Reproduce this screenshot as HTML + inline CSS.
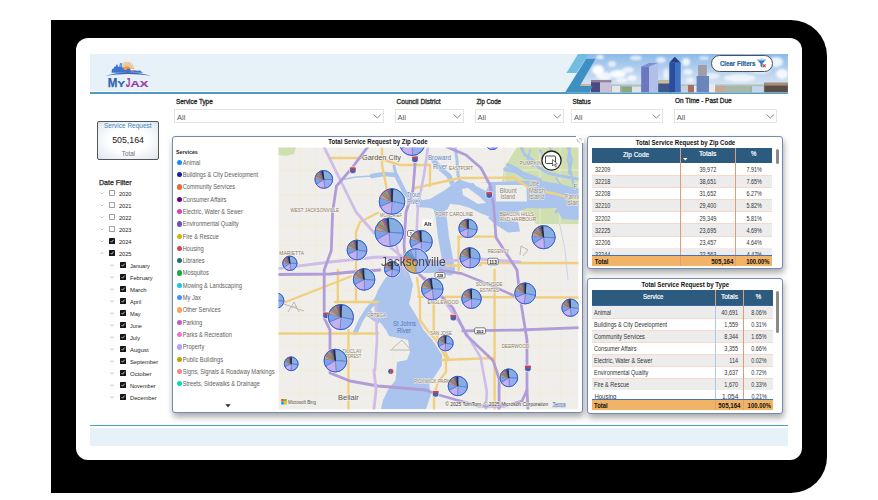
<!DOCTYPE html><html><head><meta charset="utf-8"><style>
*{box-sizing:border-box;margin:0;padding:0}
html,body{width:878px;height:500px;overflow:hidden;background:#fff;font-family:"Liberation Sans",sans-serif;color:#252423}
.a{position:absolute;white-space:nowrap}
svg.a{overflow:visible}
</style></head><body><div class="a" style="left:51px;top:20px;width:776px;height:473px;background:#000;border-radius:0 36px 36px 0"></div><div class="a" style="left:76px;top:38px;width:726px;height:422px;background:#fff;border-radius:12px"></div><div class="a" style="left:90px;top:54px;width:698px;height:36.5px;background:#e7f1f8"></div><div class="a" style="left:90px;top:92px;width:698px;height:2px;background:#4f9dc7"></div><div class="a" style="left:90px;top:424.5px;width:698px;height:1.6px;background:#4f9dc7"></div><div class="a" style="left:90px;top:427.6px;width:698px;height:18.2px;background:#e7f1f8"></div><div class="a" style="left:174px;top:108.6px;width:209.7px;height:14.6px;background:#fff;border:1px solid #e4e4e4"></div><svg class="a" style="left:372.7px;top:114.3px;width:8.5px;height:4.6px" viewBox="0 0 8.5 4.6"><path d="M0.5 0.5 L4.25 4 L8 0.5" fill="none" stroke="#605e5c" stroke-width="0.75"/></svg><div class="a" style="left:394.5px;top:108.6px;width:69.0px;height:14.6px;background:#fff;border:1px solid #e4e4e4"></div><svg class="a" style="left:452.5px;top:114.3px;width:8.5px;height:4.6px" viewBox="0 0 8.5 4.6"><path d="M0.5 0.5 L4.25 4 L8 0.5" fill="none" stroke="#605e5c" stroke-width="0.75"/></svg><div class="a" style="left:474.5px;top:108.6px;width:89.29999999999995px;height:14.6px;background:#fff;border:1px solid #e4e4e4"></div><svg class="a" style="left:552.8px;top:114.3px;width:8.5px;height:4.6px" viewBox="0 0 8.5 4.6"><path d="M0.5 0.5 L4.25 4 L8 0.5" fill="none" stroke="#605e5c" stroke-width="0.75"/></svg><div class="a" style="left:571px;top:108.6px;width:91.79999999999995px;height:14.6px;background:#fff;border:1px solid #e4e4e4"></div><svg class="a" style="left:651.8px;top:114.3px;width:8.5px;height:4.6px" viewBox="0 0 8.5 4.6"><path d="M0.5 0.5 L4.25 4 L8 0.5" fill="none" stroke="#605e5c" stroke-width="0.75"/></svg><div class="a" style="left:673.7px;top:108.6px;width:103.29999999999995px;height:14.6px;background:#fff;border:1px solid #e4e4e4"></div><svg class="a" style="left:766px;top:114.3px;width:8.5px;height:4.6px" viewBox="0 0 8.5 4.6"><path d="M0.5 0.5 L4.25 4 L8 0.5" fill="none" stroke="#605e5c" stroke-width="0.75"/></svg><div class="a" style="left:96.5px;top:120.6px;width:62px;height:39.4px;border:1.6px solid #555;border-radius:2px;background:radial-gradient(ellipse at 50% 50%,#fff 45%,#e6edf3 85%,#d5dfe8 100%)"></div><svg class="a" style="left:99.8px;top:191.7px;width:4px;height:2.5px" viewBox="0 0 4 2.5"><path d="M0.4 0.4 L2 2 L3.6 0.4" fill="none" stroke="#a0a0a0" stroke-width="0.6"/></svg><div class="a" style="left:109px;top:190px;width:6px;height:6px;border:0.8px solid #a0a0a0;border-radius:0.8px;background:#fff"></div><svg class="a" style="left:99.8px;top:203.7px;width:4px;height:2.5px" viewBox="0 0 4 2.5"><path d="M0.4 0.4 L2 2 L3.6 0.4" fill="none" stroke="#a0a0a0" stroke-width="0.6"/></svg><div class="a" style="left:109px;top:202px;width:6px;height:6px;border:0.8px solid #a0a0a0;border-radius:0.8px;background:#fff"></div><svg class="a" style="left:99.8px;top:215.7px;width:4px;height:2.5px" viewBox="0 0 4 2.5"><path d="M0.4 0.4 L2 2 L3.6 0.4" fill="none" stroke="#a0a0a0" stroke-width="0.6"/></svg><div class="a" style="left:109px;top:214px;width:6px;height:6px;border:0.8px solid #a0a0a0;border-radius:0.8px;background:#fff"></div><svg class="a" style="left:99.8px;top:227.7px;width:4px;height:2.5px" viewBox="0 0 4 2.5"><path d="M0.4 0.4 L2 2 L3.6 0.4" fill="none" stroke="#a0a0a0" stroke-width="0.6"/></svg><div class="a" style="left:109px;top:226px;width:6px;height:6px;border:0.8px solid #a0a0a0;border-radius:0.8px;background:#fff"></div><svg class="a" style="left:99.8px;top:239.7px;width:4px;height:2.5px" viewBox="0 0 4 2.5"><path d="M0.4 0.4 L2 2 L3.6 0.4" fill="none" stroke="#a0a0a0" stroke-width="0.6"/></svg><div class="a" style="left:109px;top:238px;width:6px;height:6px;background:#161616;border-radius:0.6px"><svg width="6" height="6" viewBox="0 0 6 6" style="position:absolute;left:0;top:0"><path d="M1.5 3.1 L2.6 4.2 L4.6 1.7" fill="none" stroke="#fff" stroke-width="0.75"/></svg></div><svg class="a" style="left:99.8px;top:251.7px;width:4px;height:2.5px" viewBox="0 0 4 2.5"><path d="M0.4 2 L2 0.4 L3.6 2" fill="none" stroke="#a0a0a0" stroke-width="0.6"/></svg><div class="a" style="left:109px;top:250px;width:6px;height:6px;background:#161616;border-radius:0.6px"><svg width="6" height="6" viewBox="0 0 6 6" style="position:absolute;left:0;top:0"><path d="M1.5 3.1 L2.6 4.2 L4.6 1.7" fill="none" stroke="#fff" stroke-width="0.75"/></svg></div><svg class="a" style="left:110.4px;top:263.7px;width:4px;height:2.5px" viewBox="0 0 4 2.5"><path d="M0.4 0.4 L2 2 L3.6 0.4" fill="none" stroke="#a0a0a0" stroke-width="0.6"/></svg><div class="a" style="left:120.2px;top:262px;width:6px;height:6px;background:#161616;border-radius:0.6px"><svg width="6" height="6" viewBox="0 0 6 6" style="position:absolute;left:0;top:0"><path d="M1.5 3.1 L2.6 4.2 L4.6 1.7" fill="none" stroke="#fff" stroke-width="0.75"/></svg></div><svg class="a" style="left:110.4px;top:275.7px;width:4px;height:2.5px" viewBox="0 0 4 2.5"><path d="M0.4 0.4 L2 2 L3.6 0.4" fill="none" stroke="#a0a0a0" stroke-width="0.6"/></svg><div class="a" style="left:120.2px;top:274px;width:6px;height:6px;background:#161616;border-radius:0.6px"><svg width="6" height="6" viewBox="0 0 6 6" style="position:absolute;left:0;top:0"><path d="M1.5 3.1 L2.6 4.2 L4.6 1.7" fill="none" stroke="#fff" stroke-width="0.75"/></svg></div><svg class="a" style="left:110.4px;top:287.7px;width:4px;height:2.5px" viewBox="0 0 4 2.5"><path d="M0.4 0.4 L2 2 L3.6 0.4" fill="none" stroke="#a0a0a0" stroke-width="0.6"/></svg><div class="a" style="left:120.2px;top:286px;width:6px;height:6px;background:#161616;border-radius:0.6px"><svg width="6" height="6" viewBox="0 0 6 6" style="position:absolute;left:0;top:0"><path d="M1.5 3.1 L2.6 4.2 L4.6 1.7" fill="none" stroke="#fff" stroke-width="0.75"/></svg></div><svg class="a" style="left:110.4px;top:299.7px;width:4px;height:2.5px" viewBox="0 0 4 2.5"><path d="M0.4 0.4 L2 2 L3.6 0.4" fill="none" stroke="#a0a0a0" stroke-width="0.6"/></svg><div class="a" style="left:120.2px;top:298px;width:6px;height:6px;background:#161616;border-radius:0.6px"><svg width="6" height="6" viewBox="0 0 6 6" style="position:absolute;left:0;top:0"><path d="M1.5 3.1 L2.6 4.2 L4.6 1.7" fill="none" stroke="#fff" stroke-width="0.75"/></svg></div><svg class="a" style="left:110.4px;top:311.7px;width:4px;height:2.5px" viewBox="0 0 4 2.5"><path d="M0.4 0.4 L2 2 L3.6 0.4" fill="none" stroke="#a0a0a0" stroke-width="0.6"/></svg><div class="a" style="left:120.2px;top:310px;width:6px;height:6px;background:#161616;border-radius:0.6px"><svg width="6" height="6" viewBox="0 0 6 6" style="position:absolute;left:0;top:0"><path d="M1.5 3.1 L2.6 4.2 L4.6 1.7" fill="none" stroke="#fff" stroke-width="0.75"/></svg></div><svg class="a" style="left:110.4px;top:323.7px;width:4px;height:2.5px" viewBox="0 0 4 2.5"><path d="M0.4 0.4 L2 2 L3.6 0.4" fill="none" stroke="#a0a0a0" stroke-width="0.6"/></svg><div class="a" style="left:120.2px;top:322px;width:6px;height:6px;background:#161616;border-radius:0.6px"><svg width="6" height="6" viewBox="0 0 6 6" style="position:absolute;left:0;top:0"><path d="M1.5 3.1 L2.6 4.2 L4.6 1.7" fill="none" stroke="#fff" stroke-width="0.75"/></svg></div><svg class="a" style="left:110.4px;top:335.7px;width:4px;height:2.5px" viewBox="0 0 4 2.5"><path d="M0.4 0.4 L2 2 L3.6 0.4" fill="none" stroke="#a0a0a0" stroke-width="0.6"/></svg><div class="a" style="left:120.2px;top:334px;width:6px;height:6px;background:#161616;border-radius:0.6px"><svg width="6" height="6" viewBox="0 0 6 6" style="position:absolute;left:0;top:0"><path d="M1.5 3.1 L2.6 4.2 L4.6 1.7" fill="none" stroke="#fff" stroke-width="0.75"/></svg></div><svg class="a" style="left:110.4px;top:347.7px;width:4px;height:2.5px" viewBox="0 0 4 2.5"><path d="M0.4 0.4 L2 2 L3.6 0.4" fill="none" stroke="#a0a0a0" stroke-width="0.6"/></svg><div class="a" style="left:120.2px;top:346px;width:6px;height:6px;background:#161616;border-radius:0.6px"><svg width="6" height="6" viewBox="0 0 6 6" style="position:absolute;left:0;top:0"><path d="M1.5 3.1 L2.6 4.2 L4.6 1.7" fill="none" stroke="#fff" stroke-width="0.75"/></svg></div><svg class="a" style="left:110.4px;top:359.7px;width:4px;height:2.5px" viewBox="0 0 4 2.5"><path d="M0.4 0.4 L2 2 L3.6 0.4" fill="none" stroke="#a0a0a0" stroke-width="0.6"/></svg><div class="a" style="left:120.2px;top:358px;width:6px;height:6px;background:#161616;border-radius:0.6px"><svg width="6" height="6" viewBox="0 0 6 6" style="position:absolute;left:0;top:0"><path d="M1.5 3.1 L2.6 4.2 L4.6 1.7" fill="none" stroke="#fff" stroke-width="0.75"/></svg></div><svg class="a" style="left:110.4px;top:371.7px;width:4px;height:2.5px" viewBox="0 0 4 2.5"><path d="M0.4 0.4 L2 2 L3.6 0.4" fill="none" stroke="#a0a0a0" stroke-width="0.6"/></svg><div class="a" style="left:120.2px;top:370px;width:6px;height:6px;background:#161616;border-radius:0.6px"><svg width="6" height="6" viewBox="0 0 6 6" style="position:absolute;left:0;top:0"><path d="M1.5 3.1 L2.6 4.2 L4.6 1.7" fill="none" stroke="#fff" stroke-width="0.75"/></svg></div><svg class="a" style="left:110.4px;top:383.7px;width:4px;height:2.5px" viewBox="0 0 4 2.5"><path d="M0.4 0.4 L2 2 L3.6 0.4" fill="none" stroke="#a0a0a0" stroke-width="0.6"/></svg><div class="a" style="left:120.2px;top:382px;width:6px;height:6px;background:#161616;border-radius:0.6px"><svg width="6" height="6" viewBox="0 0 6 6" style="position:absolute;left:0;top:0"><path d="M1.5 3.1 L2.6 4.2 L4.6 1.7" fill="none" stroke="#fff" stroke-width="0.75"/></svg></div><svg class="a" style="left:110.4px;top:395.7px;width:4px;height:2.5px" viewBox="0 0 4 2.5"><path d="M0.4 0.4 L2 2 L3.6 0.4" fill="none" stroke="#a0a0a0" stroke-width="0.6"/></svg><div class="a" style="left:120.2px;top:394px;width:6px;height:6px;background:#161616;border-radius:0.6px"><svg width="6" height="6" viewBox="0 0 6 6" style="position:absolute;left:0;top:0"><path d="M1.5 3.1 L2.6 4.2 L4.6 1.7" fill="none" stroke="#fff" stroke-width="0.75"/></svg></div><div class="a" style="left:171.5px;top:136px;width:411.5px;height:277.4px;border:1.2px solid #7489b6;border-radius:3px;background:#fff;box-shadow:1px 4px 6px rgba(0,0,0,0.34)"></div><div class="a" style="left:587.4px;top:136.3px;width:195.8px;height:132.8px;border:1.2px solid #7489b6;border-radius:3px;background:#fff;box-shadow:1px 4px 6px rgba(0,0,0,0.34)"></div><div class="a" style="left:587.4px;top:278.4px;width:196px;height:135.8px;border:1.2px solid #7489b6;border-radius:3px;background:#fff;box-shadow:1px 4px 6px rgba(0,0,0,0.34)"></div><div class="a" style="left:576px;top:136px;width:8px;height:7px;background:#fff"></div><svg class="a" style="left:576px;top:138px;width:6px;height:5px" viewBox="0 0 6 5"><path d="M1,1 Q0.5,4 4,4.2" fill="none" stroke="#999" stroke-width="0.7"/><path d="M3,0.6 L5.2,0.6 L5.2,2.8" fill="none" stroke="#999" stroke-width="0.6"/></svg><div class="a" style="left:176.5px;top:159.75px;width:5.3px;height:5.3px;border-radius:50%;background:#118DFF"></div><div class="a" style="left:176.5px;top:172.05px;width:5.3px;height:5.3px;border-radius:50%;background:#12239E"></div><div class="a" style="left:176.5px;top:184.35px;width:5.3px;height:5.3px;border-radius:50%;background:#E66C37"></div><div class="a" style="left:176.5px;top:196.65px;width:5.3px;height:5.3px;border-radius:50%;background:#6B007B"></div><div class="a" style="left:176.5px;top:208.95px;width:5.3px;height:5.3px;border-radius:50%;background:#E044A7"></div><div class="a" style="left:176.5px;top:221.25px;width:5.3px;height:5.3px;border-radius:50%;background:#744EC2"></div><div class="a" style="left:176.5px;top:233.55px;width:5.3px;height:5.3px;border-radius:50%;background:#D9B300"></div><div class="a" style="left:176.5px;top:245.85px;width:5.3px;height:5.3px;border-radius:50%;background:#D64550"></div><div class="a" style="left:176.5px;top:258.15px;width:5.3px;height:5.3px;border-radius:50%;background:#197278"></div><div class="a" style="left:176.5px;top:270.45px;width:5.3px;height:5.3px;border-radius:50%;background:#1AAB40"></div><div class="a" style="left:176.5px;top:282.75px;width:5.3px;height:5.3px;border-radius:50%;background:#15C6F4"></div><div class="a" style="left:176.5px;top:295.05px;width:5.3px;height:5.3px;border-radius:50%;background:#4092FF"></div><div class="a" style="left:176.5px;top:307.35px;width:5.3px;height:5.3px;border-radius:50%;background:#FFA058"></div><div class="a" style="left:176.5px;top:319.65px;width:5.3px;height:5.3px;border-radius:50%;background:#BE5DC9"></div><div class="a" style="left:176.5px;top:331.95px;width:5.3px;height:5.3px;border-radius:50%;background:#F472D0"></div><div class="a" style="left:176.5px;top:344.25px;width:5.3px;height:5.3px;border-radius:50%;background:#B5A1FF"></div><div class="a" style="left:176.5px;top:356.55px;width:5.3px;height:5.3px;border-radius:50%;background:#C4A200"></div><div class="a" style="left:176.5px;top:368.85px;width:5.3px;height:5.3px;border-radius:50%;background:#FF8080"></div><div class="a" style="left:176.5px;top:381.15px;width:5.3px;height:5.3px;border-radius:50%;background:#00DBBC"></div><svg class="a" style="left:225.3px;top:403.5px;width:6px;height:4px" viewBox="0 0 6 4"><path d="M0.3 0.3 L5.7 0.3 L3 3.3Z" fill="#252423"/></svg><div class="a" style="left:592px;top:147.6px;width:180px;height:15.800000000000011px;background:#2d5b7f"></div><div class="a" style="left:592px;top:162.6px;width:180px;height:0.8px;background:#3566a8"></div><div class="a" style="left:592px;top:163.4px;width:180px;height:12.1px;background:#fff"></div><div class="a" style="left:592px;top:175.5px;width:180px;height:12.1px;background:#ececec"></div><div class="a" style="left:592px;top:187.6px;width:180px;height:12.1px;background:#fff"></div><div class="a" style="left:592px;top:199.7px;width:180px;height:12.1px;background:#ececec"></div><div class="a" style="left:592px;top:211.8px;width:180px;height:12.1px;background:#fff"></div><div class="a" style="left:592px;top:223.9px;width:180px;height:12.1px;background:#ececec"></div><div class="a" style="left:592px;top:236.0px;width:180px;height:12.1px;background:#fff"></div><div class="a" style="left:592px;top:175.05px;width:180px;height:0.9px;background:#f6d9c8"></div><div class="a" style="left:592px;top:187.15px;width:180px;height:0.9px;background:#f6d9c8"></div><div class="a" style="left:592px;top:199.25px;width:180px;height:0.9px;background:#f6d9c8"></div><div class="a" style="left:592px;top:211.35px;width:180px;height:0.9px;background:#f6d9c8"></div><div class="a" style="left:592px;top:223.45px;width:180px;height:0.9px;background:#f6d9c8"></div><div class="a" style="left:592px;top:235.55px;width:180px;height:0.9px;background:#f6d9c8"></div><div class="a" style="left:592px;top:247.65px;width:180px;height:0.9px;background:#f6d9c8"></div><div class="a" style="left:679.8px;top:147.6px;width:1px;height:15.800000000000011px;background:#e49c78"></div><div class="a" style="left:679.8px;top:163.4px;width:1px;height:102.49999999999997px;background:#e49c78"></div><div class="a" style="left:735.2px;top:147.6px;width:1px;height:15.800000000000011px;background:#e49c78"></div><div class="a" style="left:735.2px;top:163.4px;width:1px;height:102.49999999999997px;background:#e49c78"></div><div class="a" style="left:592px;top:254.9px;width:180px;height:10.999999999999972px;background:#f1b467"></div><div class="a" style="left:592px;top:254.6px;width:180px;height:1px;background:#4670b8"></div><div class="a" style="left:679.8px;top:255.6px;width:1px;height:10.299999999999972px;background:#e49c78"></div><div class="a" style="left:735.2px;top:255.6px;width:1px;height:10.299999999999972px;background:#e49c78"></div><div class="a" style="left:775.8px;top:149px;width:3px;height:14.5px;background:#8a8a8a;border-radius:1.5px"></div><svg class="a" style="left:683px;top:157.8px;width:4.6px;height:2.6px" viewBox="0 0 4.6 2.6"><path d="M0 0 L4.6 0 L2.3 2.4Z" fill="#fff"/></svg><div class="a" style="left:592px;top:248.1px;width:180px;height:6.8px;background:#ececec;overflow:hidden"></div><div class="a" style="left:592px;top:248.1px;width:180px;height:6.8px;overflow:hidden"><svg width="180" height="7" viewBox="592 248.1 180 6.8" style="position:absolute;left:0;top:0" font-family="Liberation Sans, sans-serif"><text x="595" y="256.8" font-size="6.4" fill="#333" textLength="15.3" lengthAdjust="spacingAndGlyphs">32244</text><text x="699.5" y="256.8" font-size="6.4" fill="#333" textLength="16.8" lengthAdjust="spacingAndGlyphs">22,563</text><text x="746.8" y="256.8" font-size="6.4" fill="#333" textLength="15" lengthAdjust="spacingAndGlyphs">4.47%</text></svg></div><div class="a" style="left:679.8px;top:248.1px;width:1px;height:6.8px;background:#e49c78"></div><div class="a" style="left:735.2px;top:248.1px;width:1px;height:6.8px;background:#e49c78"></div><div class="a" style="left:591.6px;top:290px;width:181.39999999999998px;height:16px;background:#2d5b7f"></div><div class="a" style="left:591.6px;top:305.2px;width:181.39999999999998px;height:0.8px;background:#3566a8"></div><div class="a" style="left:591.6px;top:306.0px;width:181.39999999999998px;height:12.05px;background:#ececec"></div><div class="a" style="left:591.6px;top:318.05px;width:181.39999999999998px;height:12.05px;background:#fff"></div><div class="a" style="left:591.6px;top:330.1px;width:181.39999999999998px;height:12.05px;background:#ececec"></div><div class="a" style="left:591.6px;top:342.15px;width:181.39999999999998px;height:12.05px;background:#fff"></div><div class="a" style="left:591.6px;top:354.2px;width:181.39999999999998px;height:12.05px;background:#ececec"></div><div class="a" style="left:591.6px;top:366.25px;width:181.39999999999998px;height:12.05px;background:#fff"></div><div class="a" style="left:591.6px;top:378.3px;width:181.39999999999998px;height:12.05px;background:#ececec"></div><div class="a" style="left:591.6px;top:317.6px;width:181.39999999999998px;height:0.9px;background:#f6d9c8"></div><div class="a" style="left:591.6px;top:329.65px;width:181.39999999999998px;height:0.9px;background:#f6d9c8"></div><div class="a" style="left:591.6px;top:341.7px;width:181.39999999999998px;height:0.9px;background:#f6d9c8"></div><div class="a" style="left:591.6px;top:353.75px;width:181.39999999999998px;height:0.9px;background:#f6d9c8"></div><div class="a" style="left:591.6px;top:365.8px;width:181.39999999999998px;height:0.9px;background:#f6d9c8"></div><div class="a" style="left:591.6px;top:377.85px;width:181.39999999999998px;height:0.9px;background:#f6d9c8"></div><div class="a" style="left:591.6px;top:389.9px;width:181.39999999999998px;height:0.9px;background:#f6d9c8"></div><div class="a" style="left:714.7px;top:290px;width:1px;height:16px;background:#e49c78"></div><div class="a" style="left:714.7px;top:306px;width:1px;height:103.80000000000001px;background:#a9c8f2"></div><div class="a" style="left:742.9px;top:290px;width:1px;height:16px;background:#e49c78"></div><div class="a" style="left:742.9px;top:306px;width:1px;height:103.80000000000001px;background:#e49c78"></div><div class="a" style="left:591.6px;top:399px;width:181.39999999999998px;height:10.800000000000011px;background:#f1b467"></div><div class="a" style="left:591.6px;top:398.7px;width:181.39999999999998px;height:1px;background:#4670b8"></div><div class="a" style="left:714.7px;top:399.7px;width:1px;height:10.100000000000012px;background:#e49c78"></div><div class="a" style="left:742.9px;top:399.7px;width:1px;height:10.100000000000012px;background:#e49c78"></div><div class="a" style="left:775.5px;top:290.6px;width:3px;height:42px;background:#8a8a8a;border-radius:1.5px"></div><div class="a" style="left:591.6px;top:390.35px;width:181.4px;height:8.65px;background:#fff"></div><div class="a" style="left:591.6px;top:390.35px;width:181.4px;height:8.65px;overflow:hidden"><svg width="182" height="9" viewBox="591.6 390.35 182 8.65" style="position:absolute;left:0;top:0" font-family="Liberation Sans, sans-serif"><text x="594" y="399.1" font-size="6.4" fill="#333" textLength="22" lengthAdjust="spacingAndGlyphs">Housing</text><text x="721.5" y="399.1" font-size="6.4" fill="#333" textLength="16.6" lengthAdjust="spacingAndGlyphs">1,054</text><text x="751" y="399.1" font-size="6.4" fill="#333" textLength="15.5" lengthAdjust="spacingAndGlyphs">0.21%</text></svg></div><div class="a" style="left:714.7px;top:390.35px;width:1px;height:8.65px;background:#a9c8f2"></div><div class="a" style="left:742.9px;top:390.35px;width:1px;height:8.65px;background:#e49c78"></div><svg class="a" style="left:0;top:0" width="878" height="500" viewBox="0 0 878 500" font-family="Liberation Sans, sans-serif"><defs><clipPath id="mc"><rect x="278.5" y="147.5" width="300" height="262"/></clipPath></defs><g clip-path="url(#mc)"><rect x="278.5" y="147.5" width="300" height="262" fill="#efeeea"/><path d="M517,147 L580,147 L580,224 L536,224 L528,214 L520,210 L508,196 L502,182 L504,168 L512,155Z" fill="#cfdfb0" /><path d="M278,147 L296,147 L294,154 L286,156 L278,155Z" fill="#cfdfb0" /><path d="M300,147 L300,408" fill="none" stroke="#f4ead0" stroke-width="0.8" stroke-linejoin="round" stroke-linecap="round" /><path d="M315,147 L315,408" fill="none" stroke="#f4ead0" stroke-width="0.8" stroke-linejoin="round" stroke-linecap="round" /><path d="M340,147 L340,408" fill="none" stroke="#f4ead0" stroke-width="0.8" stroke-linejoin="round" stroke-linecap="round" /><path d="M372,147 L372,408" fill="none" stroke="#f4ead0" stroke-width="0.8" stroke-linejoin="round" stroke-linecap="round" /><path d="M392,147 L392,408" fill="none" stroke="#f4ead0" stroke-width="0.8" stroke-linejoin="round" stroke-linecap="round" /><path d="M460,147 L460,408" fill="none" stroke="#f4ead0" stroke-width="0.8" stroke-linejoin="round" stroke-linecap="round" /><path d="M505,147 L505,408" fill="none" stroke="#f4ead0" stroke-width="0.8" stroke-linejoin="round" stroke-linecap="round" /><path d="M540,147 L540,408" fill="none" stroke="#f4ead0" stroke-width="0.8" stroke-linejoin="round" stroke-linecap="round" /><path d="M560,147 L560,408" fill="none" stroke="#f4ead0" stroke-width="0.8" stroke-linejoin="round" stroke-linecap="round" /><path d="M278,170 L578,170" fill="none" stroke="#f4ead0" stroke-width="0.8" stroke-linejoin="round" stroke-linecap="round" /><path d="M278,195 L578,195" fill="none" stroke="#f4ead0" stroke-width="0.8" stroke-linejoin="round" stroke-linecap="round" /><path d="M278,225 L578,225" fill="none" stroke="#f4ead0" stroke-width="0.8" stroke-linejoin="round" stroke-linecap="round" /><path d="M278,245 L578,245" fill="none" stroke="#f4ead0" stroke-width="0.8" stroke-linejoin="round" stroke-linecap="round" /><path d="M278,290 L578,290" fill="none" stroke="#f4ead0" stroke-width="0.8" stroke-linejoin="round" stroke-linecap="round" /><path d="M278,315 L578,315" fill="none" stroke="#f4ead0" stroke-width="0.8" stroke-linejoin="round" stroke-linecap="round" /><path d="M278,345 L578,345" fill="none" stroke="#f4ead0" stroke-width="0.8" stroke-linejoin="round" stroke-linecap="round" /><path d="M278,370 L578,370" fill="none" stroke="#f4ead0" stroke-width="0.8" stroke-linejoin="round" stroke-linecap="round" /><path d="M278,392 L578,392" fill="none" stroke="#f4ead0" stroke-width="0.8" stroke-linejoin="round" stroke-linecap="round" /><path d="M374,300 L378,290 L384,280 L391,272 L400,266 L410,263 L425,264 L441,263 L446,266 L443,272 L430,273 L409,273 L413,284.5 L410.5,297.5 L409,304 L417,317 L423.5,330 L432.4,340 L442,355 L442,365 L435.6,375 L429.2,385 L430.8,395 L426,409 L381,409 L383,400 L388,390 L395.5,380 L397,362 L407,360 L410,352 L408,340 L389,336 L386,330 L380,322 L375,316Z" fill="#aac4ee" /><path d="M449.5,270 L443.5,237 L441,216 L438,205" fill="none" stroke="#aac4ee" stroke-width="11" stroke-linejoin="round" stroke-linecap="round" /><path d="M416,201 L430,199 L445,190 L457,181 L461,180 L470,183 L480,183 L492,182 L540,180.5 L560,184 L580,189 L580,207 L540,208.5 L527,208 L506,217 L500,219 L490,217 L480,213 L470,208 L460,205 L450,204 L447,210 L437,210 L430,208 L416,207Z" fill="#aac4ee" /><path d="M490,216 L500,218.5 L506,219 L518,222 L520,231.6 L508,232.5 L496,225 L488,218Z" fill="#aac4ee" /><path d="M462,189 L468,188 L480,197 L486,203 L478,204 L463,195Z" fill="#efeeea" /><path d="M466,175 L472,175 L478,183 L490,183 L486,191 L476,186Z" fill="#efeeea" /><path d="M495.6,185 L526.4,185 L527,201.5 L496,201.5Z" fill="#efeeea" /><path d="M555,205 L580,203 L580,220 L562,219Z" fill="#aac4ee" /><path d="M372,176 L384,174 L396,175 L400,183 L404,191 L412,201 L420,201" fill="none" stroke="#aac4ee" stroke-width="4.5" stroke-linejoin="round" stroke-linecap="round" /><path d="M340,180 L356,177 L372,176" fill="none" stroke="#aac4ee" stroke-width="1.5" stroke-linejoin="round" stroke-linecap="round" /><path d="M396,175 L394,166" fill="none" stroke="#aac4ee" stroke-width="3" stroke-linejoin="round" stroke-linecap="round" /><path d="M434,161 L440,168 L449,176 L452,183" fill="none" stroke="#aac4ee" stroke-width="5" stroke-linejoin="round" stroke-linecap="round" /><path d="M455,147 L457,160 L458,175 L460,182" fill="none" stroke="#aac4ee" stroke-width="3" stroke-linejoin="round" stroke-linecap="round" /><path d="M376,300 L368,309 L361,320 L355,333" fill="none" stroke="#aac4ee" stroke-width="4.5" stroke-linejoin="round" stroke-linecap="round" /><path d="M368,309 L375,317 L382,322" fill="none" stroke="#aac4ee" stroke-width="3" stroke-linejoin="round" stroke-linecap="round" /><path d="M366,314 L378,322" fill="none" stroke="#aac4ee" stroke-width="3" stroke-linejoin="round" stroke-linecap="round" /><path d="M521,147 L524.8,154.8 L532.6,160 L539,167.8 L548,173 L558.6,175.6 L580,179.5" fill="none" stroke="#aac4ee" stroke-width="3" stroke-linejoin="round" stroke-linecap="round" /><path d="M505,169 L517,171.7 L527.4,175 L540,180" fill="none" stroke="#aac4ee" stroke-width="3.5" stroke-linejoin="round" stroke-linecap="round" /><path d="M567.7,147 L571.6,160 L569,173" fill="none" stroke="#aac4ee" stroke-width="2.5" stroke-linejoin="round" stroke-linecap="round" /><path d="M508,165 L514,168 L521,172" fill="none" stroke="#aac4ee" stroke-width="4" stroke-linejoin="round" stroke-linecap="round" /><path d="M530,150 L528,160 L533,166" fill="none" stroke="#aac4ee" stroke-width="1.8" stroke-linejoin="round" stroke-linecap="round" /><path d="M548,186 L560,196 L572,210 L578,216" fill="none" stroke="#aac4ee" stroke-width="2.5" stroke-linejoin="round" stroke-linecap="round" /><path d="M556,178 L562,186 L568,190" fill="none" stroke="#aac4ee" stroke-width="1.8" stroke-linejoin="round" stroke-linecap="round" /><path d="M505,170 L515,172 L525,178 L540,180" fill="none" stroke="#aac4ee" stroke-width="2.5" stroke-linejoin="round" stroke-linecap="round" /><path d="M550,147 L552,158 L548,168" fill="none" stroke="#aac4ee" stroke-width="2" stroke-linejoin="round" stroke-linecap="round" /><path d="M570,147 L568,160 L572,178 L575,190" fill="none" stroke="#aac4ee" stroke-width="2.5" stroke-linejoin="round" stroke-linecap="round" /><path d="M540,150 L545,160" fill="none" stroke="#aac4ee" stroke-width="2" stroke-linejoin="round" stroke-linecap="round" /><path d="M556,212 L565,205 L575,198" fill="none" stroke="#aac4ee" stroke-width="3" stroke-linejoin="round" stroke-linecap="round" /><path d="M550,215 L560,225 L565,250 L568,280" fill="none" stroke="#c8d4ea" stroke-width="1" stroke-linejoin="round" stroke-linecap="round" /><g fill="none" stroke="#bdb8b0" stroke-width="1"><path d="M288,312 L294,302 L299,312 M291,307 L297,307 M284,304 L304,311"/><path d="M392,349 L402,340 L410,349 M390,350 L412,350"/><path d="M521,246 L528,250 L523,256 M521,246 L520,255"/></g><path d="M330,158 L378,158 L400,165 L430,165 L430,186" fill="none" stroke="#f1cf80" stroke-width="2.4" stroke-linejoin="round" stroke-linecap="round" /><path d="M382,147 L382,165 L386,185 L388,200" fill="none" stroke="#f1cf80" stroke-width="2.4" stroke-linejoin="round" stroke-linecap="round" /><path d="M415,188 L460,178 L513,177.6 L532.6,190 L556,193.8 L580,201.6" fill="none" stroke="#f1cf80" stroke-width="2.4" stroke-linejoin="round" stroke-linecap="round" /><path d="M378,212.8 L360,222 L356,232 L356,300" fill="none" stroke="#f1cf80" stroke-width="2.4" stroke-linejoin="round" stroke-linecap="round" /><path d="M278,305 L350.8,276.5" fill="none" stroke="#f1cf80" stroke-width="2.4" stroke-linejoin="round" stroke-linecap="round" /><path d="M335,302 L378,302" fill="none" stroke="#f1cf80" stroke-width="2.4" stroke-linejoin="round" stroke-linecap="round" /><path d="M337.8,270 L337.8,302" fill="none" stroke="#f1cf80" stroke-width="2.4" stroke-linejoin="round" stroke-linecap="round" /><path d="M278,333.5 L378,333.5" fill="none" stroke="#f1cf80" stroke-width="2.4" stroke-linejoin="round" stroke-linecap="round" /><path d="M348.4,330 L348.4,409" fill="none" stroke="#f1cf80" stroke-width="2.4" stroke-linejoin="round" stroke-linecap="round" /><path d="M458.6,236.6 L495,236.6" fill="none" stroke="#f1cf80" stroke-width="2.4" stroke-linejoin="round" stroke-linecap="round" /><path d="M458.6,236.6 L458.6,270" fill="none" stroke="#f1cf80" stroke-width="2.4" stroke-linejoin="round" stroke-linecap="round" /><path d="M481,263 L580,263" fill="none" stroke="#f1cf80" stroke-width="2.4" stroke-linejoin="round" stroke-linecap="round" /><path d="M418.6,296.8 L580,297.5" fill="none" stroke="#f1cf80" stroke-width="2.4" stroke-linejoin="round" stroke-linecap="round" /><path d="M446.5,265.8 L481,265" fill="none" stroke="#f1cf80" stroke-width="2.4" stroke-linejoin="round" stroke-linecap="round" /><path d="M417,278 L420,300 L420,320 L427,330 L436,340 L446,358 L446,372 L438,382 L434,395 L434,409" fill="none" stroke="#f1cf80" stroke-width="2.4" stroke-linejoin="round" stroke-linecap="round" /><path d="M494.6,270 L494.6,409" fill="none" stroke="#f1cf80" stroke-width="2.4" stroke-linejoin="round" stroke-linecap="round" /><path d="M433.7,290 L433.7,330 L442,345 L449,360" fill="none" stroke="#f1cf80" stroke-width="2.4" stroke-linejoin="round" stroke-linecap="round" /><path d="M442,360 L494.6,358" fill="none" stroke="#f1cf80" stroke-width="2.4" stroke-linejoin="round" stroke-linecap="round" /><path d="M324,147 L356,212 L378,237.5 L400,255 L418,270" fill="none" stroke="#cdbde8" stroke-width="2.8" stroke-linejoin="round" stroke-linecap="round" /><path d="M425,278 L440,295 L462,326 L480.6,357.3 L486.8,391.4 L486,409" fill="none" stroke="#cdbde8" stroke-width="2.6" stroke-linejoin="round" stroke-linecap="round" /><path d="M418.6,273.6 L452.7,307.7 L466.6,335.6 L493,360.4 L499.2,379 L499,409" fill="none" stroke="#b09cd8" stroke-width="2.8" stroke-linejoin="round" stroke-linecap="round" /><path d="M440,270 L462,273.6 L490,285 L520,298.4" fill="none" stroke="#b09cd8" stroke-width="2.6" stroke-linejoin="round" stroke-linecap="round" /><path d="M278,268.7 L330,262 L378,257 L405,258" fill="none" stroke="#cdbde8" stroke-width="2.8" stroke-linejoin="round" stroke-linecap="round" /><path d="M430,262 L480,259 L520,262" fill="none" stroke="#cdbde8" stroke-width="2.8" stroke-linejoin="round" stroke-linecap="round" /><path d="M367.7,147 L352,168 L336.5,186 L332.6,212 L331.3,250.5 L324.2,270 L324.2,318 L330,330 L330,373 L350,381 L378,386 L426,390 L435.6,394 L478,406 L505,406 L522,401 L527,390 L527,340 L520,297 L517,270 L496,237.5 L493.6,205 L490,185 L481,168 L466,155 L447,147" fill="none" stroke="#b09cd8" stroke-width="2.8" stroke-linejoin="round" stroke-linecap="round" /><path d="M278,274.5 L330,274 L352,272 L380,270" fill="none" stroke="#b09cd8" stroke-width="2.8" stroke-linejoin="round" stroke-linecap="round" /><path d="M415,147 L415,165 L413,190 L410,200 L406,212 L404,245 L405,258" fill="none" stroke="#b09cd8" stroke-width="2.8" stroke-linejoin="round" stroke-linecap="round" /><path d="M462.7,330.9 L520,330 L580,327.5" fill="none" stroke="#b09cd8" stroke-width="2.8" stroke-linejoin="round" stroke-linecap="round" /><path d="M527,390 L528,410" fill="none" stroke="#b09cd8" stroke-width="2.8" stroke-linejoin="round" stroke-linecap="round" /><path d="M374,370 L376,390 L374,409" fill="none" stroke="#cdbde8" stroke-width="2.8" stroke-linejoin="round" stroke-linecap="round" /><path d="M428,147 L424,175 L418,205 L416,245 L418,262" fill="none" stroke="#cdbde8" stroke-width="2.6" stroke-linejoin="round" stroke-linecap="round" /><path d="M376,305 L377,340 L375,370" fill="none" stroke="#cdbde8" stroke-width="2.6" stroke-linejoin="round" stroke-linecap="round" /><path d="M406,276 L400,260 L395,240" fill="none" stroke="#cdbde8" stroke-width="2.5" stroke-linejoin="round" stroke-linecap="round" /><text x="362" y="160" font-size="7.8" fill="#555" font-weight="normal" textLength="39" lengthAdjust="spacingAndGlyphs" stroke="#f6f4ef" stroke-width="1.1" paint-order="stroke" stroke-linejoin="round" >Garden City</text><text x="428" y="159.8" font-size="7" fill="#5a82c4" font-weight="normal" textLength="23" lengthAdjust="spacingAndGlyphs" stroke="#f6f4ef" stroke-width="1.1" paint-order="stroke" stroke-linejoin="round" >Broward</text><text x="433" y="168.8" font-size="7" fill="#5a82c4" font-weight="normal" textLength="14" lengthAdjust="spacingAndGlyphs" stroke="#f6f4ef" stroke-width="1.1" paint-order="stroke" stroke-linejoin="round" >River</text><text x="449" y="170.3" font-size="5.2" fill="#8b7760" font-weight="normal" textLength="24" lengthAdjust="spacingAndGlyphs" stroke="#f6f4ef" stroke-width="1.1" paint-order="stroke" stroke-linejoin="round" >EASTPORT</text><text x="406.4" y="196.5" font-size="6.6" fill="#5a82c4" font-weight="normal" textLength="13.6" lengthAdjust="spacingAndGlyphs" stroke="#f6f4ef" stroke-width="1.1" paint-order="stroke" stroke-linejoin="round" >Trout</text><text x="407" y="203.5" font-size="6.6" fill="#5a82c4" font-weight="normal" textLength="13" lengthAdjust="spacingAndGlyphs" stroke="#f6f4ef" stroke-width="1.1" paint-order="stroke" stroke-linejoin="round" >River</text><text x="380" y="216.5" font-size="5.2" fill="#8b7760" font-weight="normal" textLength="22" lengthAdjust="spacingAndGlyphs" stroke="#f6f4ef" stroke-width="1.1" paint-order="stroke" stroke-linejoin="round" >MONCRIEF</text><text x="435.4" y="215.7" font-size="5.2" fill="#8b7760" font-weight="normal" textLength="37.8" lengthAdjust="spacingAndGlyphs" stroke="#f6f4ef" stroke-width="1.1" paint-order="stroke" stroke-linejoin="round" >FORT CAROLINE</text><text x="499.8" y="215.5" font-size="5.2" fill="#8b7760" font-weight="normal" textLength="34.2" lengthAdjust="spacingAndGlyphs" stroke="#f6f4ef" stroke-width="1.1" paint-order="stroke" stroke-linejoin="round" >BEACON HILLS</text><text x="499.8" y="221.2" font-size="5.2" fill="#8b7760" font-weight="normal" textLength="36.4" lengthAdjust="spacingAndGlyphs" stroke="#f6f4ef" stroke-width="1.1" paint-order="stroke" stroke-linejoin="round" >AND HARBOUR</text><text x="499.8" y="192.6" font-size="6.4" fill="#86806f" font-weight="normal" textLength="16.8" lengthAdjust="spacingAndGlyphs" stroke="#f6f4ef" stroke-width="1.1" paint-order="stroke" stroke-linejoin="round" >Blount</text><text x="500.5" y="199.1" font-size="6.4" fill="#86806f" font-weight="normal" textLength="14.5" lengthAdjust="spacingAndGlyphs" stroke="#f6f4ef" stroke-width="1.1" paint-order="stroke" stroke-linejoin="round" >Island</text><text x="529.4" y="186.2" font-size="6.4" fill="#86806f" font-weight="normal" textLength="9.6" lengthAdjust="spacingAndGlyphs" stroke="#f6f4ef" stroke-width="1.1" paint-order="stroke" stroke-linejoin="round" >Little</text><text x="528.7" y="193.2" font-size="6.4" fill="#86806f" font-weight="normal" textLength="16.3" lengthAdjust="spacingAndGlyphs" stroke="#f6f4ef" stroke-width="1.1" paint-order="stroke" stroke-linejoin="round" >Marsh</text><text x="528.7" y="199.2" font-size="6.4" fill="#86806f" font-weight="normal" textLength="15.3" lengthAdjust="spacingAndGlyphs" stroke="#f6f4ef" stroke-width="1.1" paint-order="stroke" stroke-linejoin="round" >Island</text><text x="565" y="198.6" font-size="6.4" fill="#86806f" font-weight="normal" textLength="14" lengthAdjust="spacingAndGlyphs" stroke="#f6f4ef" stroke-width="1.1" paint-order="stroke" stroke-linejoin="round" >Fanni</text><text x="566" y="204.6" font-size="6.4" fill="#86806f" font-weight="normal" textLength="13" lengthAdjust="spacingAndGlyphs" stroke="#f6f4ef" stroke-width="1.1" paint-order="stroke" stroke-linejoin="round" >Islan</text><text x="519.6" y="165.2" font-size="5.2" fill="#8b7760" font-weight="normal" textLength="22.1" lengthAdjust="spacingAndGlyphs" stroke="#f6f4ef" stroke-width="1.1" paint-order="stroke" stroke-linejoin="round" >PUMPKIN</text><text x="573.6" y="188.5" font-size="6.4" fill="#86806f" font-weight="normal" textLength="4" lengthAdjust="spacingAndGlyphs" stroke="#f6f4ef" stroke-width="1.1" paint-order="stroke" stroke-linejoin="round" >F</text><text x="290.4" y="211.6" font-size="5.2" fill="#8b7760" font-weight="normal" textLength="48.7" lengthAdjust="spacingAndGlyphs" stroke="#f6f4ef" stroke-width="1.1" paint-order="stroke" stroke-linejoin="round" >WEST JACKSONVILLE</text><text x="279.3" y="255.1" font-size="5.2" fill="#8b7760" font-weight="normal" textLength="24.7" lengthAdjust="spacingAndGlyphs" stroke="#f6f4ef" stroke-width="1.1" paint-order="stroke" stroke-linejoin="round" >MARIETTA</text><text x="487.8" y="252.6" font-size="5.2" fill="#8b7760" font-weight="normal" textLength="21.4" lengthAdjust="spacingAndGlyphs" stroke="#f6f4ef" stroke-width="1.1" paint-order="stroke" stroke-linejoin="round" >REGENCY</text><text x="427.4" y="304.1" font-size="5.2" fill="#8b7760" font-weight="normal" textLength="31.2" lengthAdjust="spacingAndGlyphs" stroke="#f6f4ef" stroke-width="1.1" paint-order="stroke" stroke-linejoin="round" >ENGLEWOOD</text><text x="475.7" y="286.1" font-size="5.2" fill="#8b7760" font-weight="normal" textLength="27" lengthAdjust="spacingAndGlyphs" stroke="#f6f4ef" stroke-width="1.1" paint-order="stroke" stroke-linejoin="round" >SOUTHSIDE</text><text x="480" y="291.7" font-size="5.2" fill="#8b7760" font-weight="normal" textLength="19" lengthAdjust="spacingAndGlyphs" stroke="#f6f4ef" stroke-width="1.1" paint-order="stroke" stroke-linejoin="round" >ESTATES</text><text x="367" y="317.1" font-size="5.2" fill="#8b7760" font-weight="normal" textLength="19" lengthAdjust="spacingAndGlyphs" stroke="#f6f4ef" stroke-width="1.1" paint-order="stroke" stroke-linejoin="round" >ORTEGA</text><text x="393" y="326.2" font-size="6.8" fill="#4f76bf" font-weight="normal" textLength="23" lengthAdjust="spacingAndGlyphs" >St Johns</text><text x="397" y="333.2" font-size="6.8" fill="#4f76bf" font-weight="normal" textLength="14" lengthAdjust="spacingAndGlyphs" >River</text><text x="430" y="335.1" font-size="5.2" fill="#8b7760" font-weight="normal" textLength="22" lengthAdjust="spacingAndGlyphs" stroke="#f6f4ef" stroke-width="1.1" paint-order="stroke" stroke-linejoin="round" >SAN JOSE</text><text x="501.8" y="348.3" font-size="5.2" fill="#8b7760" font-weight="normal" textLength="27.5" lengthAdjust="spacingAndGlyphs" stroke="#f6f4ef" stroke-width="1.1" paint-order="stroke" stroke-linejoin="round" >DEERWOOD</text><text x="342.8" y="352.5" font-size="5.2" fill="#8b7760" font-weight="normal" textLength="19.2" lengthAdjust="spacingAndGlyphs" stroke="#f6f4ef" stroke-width="1.1" paint-order="stroke" stroke-linejoin="round" >DUCLAY</text><text x="345" y="358.1" font-size="5.2" fill="#8b7760" font-weight="normal" textLength="16.2" lengthAdjust="spacingAndGlyphs" stroke="#f6f4ef" stroke-width="1.1" paint-order="stroke" stroke-linejoin="round" >FOREST</text><text x="414" y="382.9" font-size="5.2" fill="#8b7760" font-weight="normal" textLength="36" lengthAdjust="spacingAndGlyphs" stroke="#f6f4ef" stroke-width="1.1" paint-order="stroke" stroke-linejoin="round" >PICKWICK PARK</text><text x="338" y="399.7" font-size="7.8" fill="#555" font-weight="normal" textLength="20.8" lengthAdjust="spacingAndGlyphs" stroke="#f6f4ef" stroke-width="1.1" paint-order="stroke" stroke-linejoin="round" >Bellair</text><g transform="translate(352.8,170.4)"><path d="M-3.25,-3.25 L3.25,-3.25 L3.25,0.975 Q3.25,2.9250000000000003 0,3.25 Q-3.25,2.9250000000000003 -3.25,0.975Z" fill="#4a5fb0" stroke="#fff" stroke-width="0.7"/><rect x="-2.85" y="-2.85" width="5.7" height="1.8200000000000003" fill="#d8403a"/></g><g transform="translate(415,159.4)"><path d="M-3.25,-3.25 L3.25,-3.25 L3.25,0.975 Q3.25,2.9250000000000003 0,3.25 Q-3.25,2.9250000000000003 -3.25,0.975Z" fill="#4a5fb0" stroke="#fff" stroke-width="0.7"/><rect x="-2.85" y="-2.85" width="5.7" height="1.8200000000000003" fill="#d8403a"/></g><g transform="translate(489.3,195.2)"><path d="M-3.25,-3.25 L3.25,-3.25 L3.25,0.975 Q3.25,2.9250000000000003 0,3.25 Q-3.25,2.9250000000000003 -3.25,0.975Z" fill="#4a5fb0" stroke="#fff" stroke-width="0.7"/><rect x="-2.85" y="-2.85" width="5.7" height="1.8200000000000003" fill="#d8403a"/></g><g transform="translate(326.1,315.5)"><path d="M-3.25,-3.25 L3.25,-3.25 L3.25,0.975 Q3.25,2.9250000000000003 0,3.25 Q-3.25,2.9250000000000003 -3.25,0.975Z" fill="#4a5fb0" stroke="#fff" stroke-width="0.7"/><rect x="-2.85" y="-2.85" width="5.7" height="1.8200000000000003" fill="#d8403a"/></g><g transform="translate(453.4,317.7)"><path d="M-3.25,-3.25 L3.25,-3.25 L3.25,0.975 Q3.25,2.9250000000000003 0,3.25 Q-3.25,2.9250000000000003 -3.25,0.975Z" fill="#4a5fb0" stroke="#fff" stroke-width="0.7"/><rect x="-2.85" y="-2.85" width="5.7" height="1.8200000000000003" fill="#d8403a"/></g><g transform="translate(435.6,394)"><path d="M-3.25,-3.25 L3.25,-3.25 L3.25,0.975 Q3.25,2.9250000000000003 0,3.25 Q-3.25,2.9250000000000003 -3.25,0.975Z" fill="#4a5fb0" stroke="#fff" stroke-width="0.7"/><rect x="-2.85" y="-2.85" width="5.7" height="1.8200000000000003" fill="#d8403a"/></g><g transform="translate(527.9,368.6)"><path d="M-3.25,-3.25 L3.25,-3.25 L3.25,0.975 Q3.25,2.9250000000000003 0,3.25 Q-3.25,2.9250000000000003 -3.25,0.975Z" fill="#4a5fb0" stroke="#fff" stroke-width="0.7"/><rect x="-2.85" y="-2.85" width="5.7" height="1.8200000000000003" fill="#d8403a"/></g><rect x="487.8" y="258.3" width="10.4" height="6.5" rx="1.5" fill="#fff" stroke="#333" stroke-width="0.6"/><text x="493.0" y="263.5" font-size="4.7" fill="#222" font-weight="bold" text-anchor="middle">113</text><rect x="435" y="272.5" width="10" height="5.5" rx="1.5" fill="#fff" stroke="#333" stroke-width="0.6"/><text x="440.0" y="276.7" font-size="3.7" fill="#222" font-weight="bold" text-anchor="middle">228</text><rect x="474.5" y="327.8" width="11" height="6" rx="1.5" fill="#fff" stroke="#333" stroke-width="0.6"/><text x="480.0" y="332.5" font-size="4.2" fill="#222" font-weight="bold" text-anchor="middle">202</text><rect x="407.5" y="230.5" width="7" height="6" rx="1.5" fill="#fff" stroke="#333" stroke-width="0.6"/><text x="411.0" y="235.2" font-size="4.2" fill="#222" font-weight="bold" text-anchor="middle">1</text><rect x="422.5" y="219.5" width="10" height="7" fill="#fff"/><text x="424" y="225.8" font-size="5.8" fill="#111" font-weight="bold" textLength="7.3" lengthAdjust="spacingAndGlyphs" >Alt</text><circle cx="323.8" cy="179.4" r="9.8" fill="#fffef8" opacity="0.85"/><g opacity="1"><path d="M323.8,179.4 L322.87,170.55 A8.9,8.9 0 0 1 332.70,179.56Z" fill="#88aee0" stroke="#3f6cc0" stroke-width="0.6"/><path d="M323.8,179.4 L332.70,179.56 A8.9,8.9 0 0 1 324.73,188.25Z" fill="#94aef0" stroke="#4a68d0" stroke-width="0.6"/><path d="M323.8,179.4 L324.73,188.25 A8.9,8.9 0 0 1 316.34,184.25Z" fill="#c4b2ee" stroke="#8068cc" stroke-width="0.6"/><path d="M323.8,179.4 L316.34,184.25 A8.9,8.9 0 0 1 314.97,178.32Z" fill="#78a2ec" stroke="#3f68cc" stroke-width="0.6"/><path d="M323.8,179.4 L314.97,178.32 A8.9,8.9 0 0 1 315.34,176.65Z" fill="#f3a460" stroke="#d07a30" stroke-width="0.6"/><path d="M323.8,179.4 L315.34,176.65 A8.9,8.9 0 0 1 315.73,175.64Z" fill="#62d2f2" stroke="#30a0c8" stroke-width="0.6"/><path d="M323.8,179.4 L315.73,175.64 A8.9,8.9 0 0 1 316.79,173.92Z" fill="#ec6e68" stroke="#c04848" stroke-width="0.6"/><path d="M323.8,179.4 L316.79,173.92 A8.9,8.9 0 0 1 317.84,172.79Z" fill="#44c4a2" stroke="#20907a" stroke-width="0.6"/><path d="M323.8,179.4 L317.84,172.79 A8.9,8.9 0 0 1 318.82,172.02Z" fill="#e8a040" stroke="#b87020" stroke-width="0.6"/><path d="M323.8,179.4 L318.82,172.02 A8.9,8.9 0 0 1 319.90,171.40Z" fill="#d060c0" stroke="#a04090" stroke-width="0.6"/><path d="M323.8,179.4 L319.90,171.40 A8.9,8.9 0 0 1 320.90,170.98Z" fill="#9a70d8" stroke="#6a40b0" stroke-width="0.6"/><path d="M323.8,179.4 L320.90,170.98 A8.9,8.9 0 0 1 321.95,170.69Z" fill="#2f8e46" stroke="#1e6430" stroke-width="0.6"/><path d="M323.8,179.4 L321.95,170.69 A8.9,8.9 0 0 1 322.87,170.55Z" fill="#23285e" stroke="#151a40" stroke-width="0.6"/></g><circle cx="323.8" cy="179.4" r="8.9" fill="none" stroke="#3a5ecc" stroke-width="1"/><circle cx="412.2" cy="142.8" r="13.6" fill="#fffef8" opacity="0.85"/><g opacity="1"><path d="M412.2,142.8 L411.98,130.10 A12.7,12.7 0 0 1 424.83,144.13Z" fill="#88aee0" stroke="#3f6cc0" stroke-width="0.6"/><path d="M412.2,142.8 L424.83,144.13 A12.7,12.7 0 0 1 412.42,155.50Z" fill="#94aef0" stroke="#4a68d0" stroke-width="0.6"/><path d="M412.2,142.8 L412.42,155.50 A12.7,12.7 0 0 1 400.99,148.76Z" fill="#c4b2ee" stroke="#8068cc" stroke-width="0.6"/><path d="M412.2,142.8 L400.99,148.76 A12.7,12.7 0 0 1 399.78,140.16Z" fill="#78a2ec" stroke="#3f68cc" stroke-width="0.6"/><path d="M412.2,142.8 L399.78,140.16 A12.7,12.7 0 0 1 400.51,137.84Z" fill="#f3a460" stroke="#d07a30" stroke-width="0.6"/><path d="M412.2,142.8 L400.51,137.84 A12.7,12.7 0 0 1 401.20,136.45Z" fill="#62d2f2" stroke="#30a0c8" stroke-width="0.6"/><path d="M412.2,142.8 L401.20,136.45 A12.7,12.7 0 0 1 402.91,134.14Z" fill="#ec6e68" stroke="#c04848" stroke-width="0.6"/><path d="M412.2,142.8 L402.91,134.14 A12.7,12.7 0 0 1 404.56,132.66Z" fill="#44c4a2" stroke="#20907a" stroke-width="0.6"/><path d="M412.2,142.8 L404.56,132.66 A12.7,12.7 0 0 1 406.04,131.69Z" fill="#e8a040" stroke="#b87020" stroke-width="0.6"/><path d="M412.2,142.8 L406.04,131.69 A12.7,12.7 0 0 1 407.65,130.94Z" fill="#d060c0" stroke="#a04090" stroke-width="0.6"/><path d="M412.2,142.8 L407.65,130.94 A12.7,12.7 0 0 1 409.13,130.48Z" fill="#9a70d8" stroke="#6a40b0" stroke-width="0.6"/><path d="M412.2,142.8 L409.13,130.48 A12.7,12.7 0 0 1 410.65,130.19Z" fill="#2f8e46" stroke="#1e6430" stroke-width="0.6"/><path d="M412.2,142.8 L410.65,130.19 A12.7,12.7 0 0 1 411.98,130.10Z" fill="#23285e" stroke="#151a40" stroke-width="0.6"/></g><circle cx="412.2" cy="142.8" r="12.7" fill="none" stroke="#3a5ecc" stroke-width="1"/><circle cx="392" cy="201.5" r="13.700000000000001" fill="#fffef8" opacity="0.85"/><g opacity="1"><path d="M392,201.5 L392.89,188.73 A12.8,12.8 0 0 1 404.56,203.94Z" fill="#88aee0" stroke="#3f6cc0" stroke-width="0.6"/><path d="M392,201.5 L404.56,203.94 A12.8,12.8 0 0 1 391.11,214.27Z" fill="#94aef0" stroke="#4a68d0" stroke-width="0.6"/><path d="M392,201.5 L391.11,214.27 A12.8,12.8 0 0 1 380.22,206.50Z" fill="#c4b2ee" stroke="#8068cc" stroke-width="0.6"/><path d="M392,201.5 L380.22,206.50 A12.8,12.8 0 0 1 379.76,197.76Z" fill="#78a2ec" stroke="#3f68cc" stroke-width="0.6"/><path d="M392,201.5 L379.76,197.76 A12.8,12.8 0 0 1 380.70,195.49Z" fill="#f3a460" stroke="#d07a30" stroke-width="0.6"/><path d="M392,201.5 L380.70,195.49 A12.8,12.8 0 0 1 381.51,194.16Z" fill="#62d2f2" stroke="#30a0c8" stroke-width="0.6"/><path d="M392,201.5 L381.51,194.16 A12.8,12.8 0 0 1 383.44,191.99Z" fill="#ec6e68" stroke="#c04848" stroke-width="0.6"/><path d="M392,201.5 L383.44,191.99 A12.8,12.8 0 0 1 385.22,190.64Z" fill="#44c4a2" stroke="#20907a" stroke-width="0.6"/><path d="M392,201.5 L385.22,190.64 A12.8,12.8 0 0 1 386.79,189.81Z" fill="#e8a040" stroke="#b87020" stroke-width="0.6"/><path d="M392,201.5 L386.79,189.81 A12.8,12.8 0 0 1 388.47,189.20Z" fill="#d060c0" stroke="#a04090" stroke-width="0.6"/><path d="M392,201.5 L388.47,189.20 A12.8,12.8 0 0 1 390.00,188.86Z" fill="#9a70d8" stroke="#6a40b0" stroke-width="0.6"/><path d="M392,201.5 L390.00,188.86 A12.8,12.8 0 0 1 391.55,188.71Z" fill="#2f8e46" stroke="#1e6430" stroke-width="0.6"/><path d="M392,201.5 L391.55,188.71 A12.8,12.8 0 0 1 392.89,188.73Z" fill="#23285e" stroke="#151a40" stroke-width="0.6"/></g><circle cx="392" cy="201.5" r="12.8" fill="none" stroke="#3a5ecc" stroke-width="1"/><circle cx="389.2" cy="232.3" r="15.200000000000001" fill="#fffef8" opacity="0.85"/><g opacity="1"><path d="M389.2,232.3 L388.45,218.02 A14.3,14.3 0 0 1 403.47,233.30Z" fill="#88aee0" stroke="#3f6cc0" stroke-width="0.6"/><path d="M389.2,232.3 L403.47,233.30 A14.3,14.3 0 0 1 389.95,246.58Z" fill="#94aef0" stroke="#4a68d0" stroke-width="0.6"/><path d="M389.2,232.3 L389.95,246.58 A14.3,14.3 0 0 1 376.82,239.45Z" fill="#c4b2ee" stroke="#8068cc" stroke-width="0.6"/><path d="M389.2,232.3 L376.82,239.45 A14.3,14.3 0 0 1 375.12,229.82Z" fill="#78a2ec" stroke="#3f68cc" stroke-width="0.6"/><path d="M389.2,232.3 L375.12,229.82 A14.3,14.3 0 0 1 375.85,227.18Z" fill="#f3a460" stroke="#d07a30" stroke-width="0.6"/><path d="M389.2,232.3 L375.85,227.18 A14.3,14.3 0 0 1 376.57,225.59Z" fill="#62d2f2" stroke="#30a0c8" stroke-width="0.6"/><path d="M389.2,232.3 L376.57,225.59 A14.3,14.3 0 0 1 378.41,222.92Z" fill="#ec6e68" stroke="#c04848" stroke-width="0.6"/><path d="M389.2,232.3 L378.41,222.92 A14.3,14.3 0 0 1 380.20,221.19Z" fill="#44c4a2" stroke="#20907a" stroke-width="0.6"/><path d="M389.2,232.3 L380.20,221.19 A14.3,14.3 0 0 1 381.83,220.04Z" fill="#e8a040" stroke="#b87020" stroke-width="0.6"/><path d="M389.2,232.3 L381.83,220.04 A14.3,14.3 0 0 1 383.61,219.14Z" fill="#d060c0" stroke="#a04090" stroke-width="0.6"/><path d="M389.2,232.3 L383.61,219.14 A14.3,14.3 0 0 1 385.26,218.55Z" fill="#9a70d8" stroke="#6a40b0" stroke-width="0.6"/><path d="M389.2,232.3 L385.26,218.55 A14.3,14.3 0 0 1 386.96,218.18Z" fill="#2f8e46" stroke="#1e6430" stroke-width="0.6"/><path d="M389.2,232.3 L386.96,218.18 A14.3,14.3 0 0 1 388.45,218.02Z" fill="#23285e" stroke="#151a40" stroke-width="0.6"/></g><circle cx="389.2" cy="232.3" r="14.3" fill="none" stroke="#3a5ecc" stroke-width="1"/><circle cx="357" cy="250" r="10.8" fill="#fffef8" opacity="0.85"/><g opacity="1"><path d="M357,250 L357.35,240.11 A9.9,9.9 0 0 1 366.78,251.55Z" fill="#88aee0" stroke="#3f6cc0" stroke-width="0.6"/><path d="M357,250 L366.78,251.55 A9.9,9.9 0 0 1 356.65,259.89Z" fill="#94aef0" stroke="#4a68d0" stroke-width="0.6"/><path d="M357,250 L356.65,259.89 A9.9,9.9 0 0 1 348.03,254.18Z" fill="#c4b2ee" stroke="#8068cc" stroke-width="0.6"/><path d="M357,250 L348.03,254.18 A9.9,9.9 0 0 1 347.44,247.44Z" fill="#78a2ec" stroke="#3f68cc" stroke-width="0.6"/><path d="M357,250 L347.44,247.44 A9.9,9.9 0 0 1 348.10,245.66Z" fill="#f3a460" stroke="#d07a30" stroke-width="0.6"/><path d="M357,250 L348.10,245.66 A9.9,9.9 0 0 1 348.70,244.61Z" fill="#62d2f2" stroke="#30a0c8" stroke-width="0.6"/><path d="M357,250 L348.70,244.61 A9.9,9.9 0 0 1 350.12,242.88Z" fill="#ec6e68" stroke="#c04848" stroke-width="0.6"/><path d="M357,250 L350.12,242.88 A9.9,9.9 0 0 1 351.46,241.79Z" fill="#44c4a2" stroke="#20907a" stroke-width="0.6"/><path d="M357,250 L351.46,241.79 A9.9,9.9 0 0 1 352.66,241.10Z" fill="#e8a040" stroke="#b87020" stroke-width="0.6"/><path d="M357,250 L352.66,241.10 A9.9,9.9 0 0 1 353.94,240.58Z" fill="#d060c0" stroke="#a04090" stroke-width="0.6"/><path d="M357,250 L353.94,240.58 A9.9,9.9 0 0 1 355.11,240.28Z" fill="#9a70d8" stroke="#6a40b0" stroke-width="0.6"/><path d="M357,250 L355.11,240.28 A9.9,9.9 0 0 1 356.31,240.12Z" fill="#2f8e46" stroke="#1e6430" stroke-width="0.6"/><path d="M357,250 L356.31,240.12 A9.9,9.9 0 0 1 357.35,240.11Z" fill="#23285e" stroke="#151a40" stroke-width="0.6"/></g><circle cx="357" cy="250" r="9.9" fill="none" stroke="#3a5ecc" stroke-width="1"/><circle cx="289.9" cy="263.3" r="8.1" fill="#fffef8" opacity="0.85"/><g opacity="1"><path d="M289.9,263.3 L289.27,256.13 A7.2,7.2 0 0 1 297.10,263.55Z" fill="#88aee0" stroke="#3f6cc0" stroke-width="0.6"/><path d="M289.9,263.3 L297.10,263.55 A7.2,7.2 0 0 1 290.53,270.47Z" fill="#94aef0" stroke="#4a68d0" stroke-width="0.6"/><path d="M289.9,263.3 L290.53,270.47 A7.2,7.2 0 0 1 283.79,267.12Z" fill="#c4b2ee" stroke="#8068cc" stroke-width="0.6"/><path d="M289.9,263.3 L283.79,267.12 A7.2,7.2 0 0 1 282.77,262.30Z" fill="#78a2ec" stroke="#3f68cc" stroke-width="0.6"/><path d="M289.9,263.3 L282.77,262.30 A7.2,7.2 0 0 1 283.09,260.96Z" fill="#f3a460" stroke="#d07a30" stroke-width="0.6"/><path d="M289.9,263.3 L283.09,260.96 A7.2,7.2 0 0 1 283.43,260.14Z" fill="#62d2f2" stroke="#30a0c8" stroke-width="0.6"/><path d="M289.9,263.3 L283.43,260.14 A7.2,7.2 0 0 1 284.30,258.77Z" fill="#ec6e68" stroke="#c04848" stroke-width="0.6"/><path d="M289.9,263.3 L284.30,258.77 A7.2,7.2 0 0 1 285.18,257.87Z" fill="#44c4a2" stroke="#20907a" stroke-width="0.6"/><path d="M289.9,263.3 L285.18,257.87 A7.2,7.2 0 0 1 285.98,257.26Z" fill="#e8a040" stroke="#b87020" stroke-width="0.6"/><path d="M289.9,263.3 L285.98,257.26 A7.2,7.2 0 0 1 286.86,256.77Z" fill="#d060c0" stroke="#a04090" stroke-width="0.6"/><path d="M289.9,263.3 L286.86,256.77 A7.2,7.2 0 0 1 287.68,256.45Z" fill="#9a70d8" stroke="#6a40b0" stroke-width="0.6"/><path d="M289.9,263.3 L287.68,256.45 A7.2,7.2 0 0 1 288.53,256.23Z" fill="#2f8e46" stroke="#1e6430" stroke-width="0.6"/><path d="M289.9,263.3 L288.53,256.23 A7.2,7.2 0 0 1 289.27,256.13Z" fill="#23285e" stroke="#151a40" stroke-width="0.6"/></g><circle cx="289.9" cy="263.3" r="7.2" fill="none" stroke="#3a5ecc" stroke-width="1"/><circle cx="421.1" cy="241.6" r="12.1" fill="#fffef8" opacity="0.85"/><g opacity="1"><path d="M421.1,241.6 L421.10,230.40 A11.2,11.2 0 0 1 432.22,242.96Z" fill="#88aee0" stroke="#3f6cc0" stroke-width="0.6"/><path d="M421.1,241.6 L432.22,242.96 A11.2,11.2 0 0 1 421.10,252.80Z" fill="#94aef0" stroke="#4a68d0" stroke-width="0.6"/><path d="M421.1,241.6 L421.10,252.80 A11.2,11.2 0 0 1 411.12,246.68Z" fill="#c4b2ee" stroke="#8068cc" stroke-width="0.6"/><path d="M421.1,241.6 L411.12,246.68 A11.2,11.2 0 0 1 410.19,239.08Z" fill="#78a2ec" stroke="#3f68cc" stroke-width="0.6"/><path d="M421.1,241.6 L410.19,239.08 A11.2,11.2 0 0 1 410.87,237.04Z" fill="#f3a460" stroke="#d07a30" stroke-width="0.6"/><path d="M421.1,241.6 L410.87,237.04 A11.2,11.2 0 0 1 411.50,235.83Z" fill="#62d2f2" stroke="#30a0c8" stroke-width="0.6"/><path d="M421.1,241.6 L411.50,235.83 A11.2,11.2 0 0 1 413.04,233.82Z" fill="#ec6e68" stroke="#c04848" stroke-width="0.6"/><path d="M421.1,241.6 L413.04,233.82 A11.2,11.2 0 0 1 414.52,232.54Z" fill="#44c4a2" stroke="#20907a" stroke-width="0.6"/><path d="M421.1,241.6 L414.52,232.54 A11.2,11.2 0 0 1 415.84,231.71Z" fill="#e8a040" stroke="#b87020" stroke-width="0.6"/><path d="M421.1,241.6 L415.84,231.71 A11.2,11.2 0 0 1 417.27,231.08Z" fill="#d060c0" stroke="#a04090" stroke-width="0.6"/><path d="M421.1,241.6 L417.27,231.08 A11.2,11.2 0 0 1 418.58,230.69Z" fill="#9a70d8" stroke="#6a40b0" stroke-width="0.6"/><path d="M421.1,241.6 L418.58,230.69 A11.2,11.2 0 0 1 419.93,230.46Z" fill="#2f8e46" stroke="#1e6430" stroke-width="0.6"/><path d="M421.1,241.6 L419.93,230.46 A11.2,11.2 0 0 1 421.10,230.40Z" fill="#23285e" stroke="#151a40" stroke-width="0.6"/></g><circle cx="421.1" cy="241.6" r="11.2" fill="none" stroke="#3a5ecc" stroke-width="1"/><circle cx="392.1" cy="269.2" r="8.6" fill="#fffef8" opacity="0.85"/><g opacity="1"><path d="M392.1,269.2 L392.77,261.53 A7.7,7.7 0 0 1 399.63,270.80Z" fill="#88aee0" stroke="#3f6cc0" stroke-width="0.6"/><path d="M392.1,269.2 L399.63,270.80 A7.7,7.7 0 0 1 391.43,276.87Z" fill="#94aef0" stroke="#4a68d0" stroke-width="0.6"/><path d="M392.1,269.2 L391.43,276.87 A7.7,7.7 0 0 1 384.96,272.08Z" fill="#c4b2ee" stroke="#8068cc" stroke-width="0.6"/><path d="M392.1,269.2 L384.96,272.08 A7.7,7.7 0 0 1 384.78,266.82Z" fill="#78a2ec" stroke="#3f68cc" stroke-width="0.6"/><path d="M392.1,269.2 L384.78,266.82 A7.7,7.7 0 0 1 385.37,265.47Z" fill="#f3a460" stroke="#d07a30" stroke-width="0.6"/><path d="M392.1,269.2 L385.37,265.47 A7.7,7.7 0 0 1 385.87,264.67Z" fill="#62d2f2" stroke="#30a0c8" stroke-width="0.6"/><path d="M392.1,269.2 L385.87,264.67 A7.7,7.7 0 0 1 387.05,263.39Z" fill="#ec6e68" stroke="#c04848" stroke-width="0.6"/><path d="M392.1,269.2 L387.05,263.39 A7.7,7.7 0 0 1 388.13,262.60Z" fill="#44c4a2" stroke="#20907a" stroke-width="0.6"/><path d="M392.1,269.2 L388.13,262.60 A7.7,7.7 0 0 1 389.09,262.11Z" fill="#e8a040" stroke="#b87020" stroke-width="0.6"/><path d="M392.1,269.2 L389.09,262.11 A7.7,7.7 0 0 1 390.11,261.76Z" fill="#d060c0" stroke="#a04090" stroke-width="0.6"/><path d="M392.1,269.2 L390.11,261.76 A7.7,7.7 0 0 1 391.03,261.57Z" fill="#9a70d8" stroke="#6a40b0" stroke-width="0.6"/><path d="M392.1,269.2 L391.03,261.57 A7.7,7.7 0 0 1 391.97,261.50Z" fill="#2f8e46" stroke="#1e6430" stroke-width="0.6"/><path d="M392.1,269.2 L391.97,261.50 A7.7,7.7 0 0 1 392.77,261.53Z" fill="#23285e" stroke="#151a40" stroke-width="0.6"/></g><circle cx="392.1" cy="269.2" r="7.7" fill="none" stroke="#3a5ecc" stroke-width="1"/><circle cx="364.1" cy="279.4" r="11.700000000000001" fill="#fffef8" opacity="0.85"/><g opacity="1"><path d="M364.1,279.4 L363.72,268.61 A10.8,10.8 0 0 1 374.86,280.34Z" fill="#88aee0" stroke="#3f6cc0" stroke-width="0.6"/><path d="M364.1,279.4 L374.86,280.34 A10.8,10.8 0 0 1 364.48,290.19Z" fill="#94aef0" stroke="#4a68d0" stroke-width="0.6"/><path d="M364.1,279.4 L364.48,290.19 A10.8,10.8 0 0 1 354.65,284.64Z" fill="#c4b2ee" stroke="#8068cc" stroke-width="0.6"/><path d="M364.1,279.4 L354.65,284.64 A10.8,10.8 0 0 1 353.50,277.34Z" fill="#78a2ec" stroke="#3f68cc" stroke-width="0.6"/><path d="M364.1,279.4 L353.50,277.34 A10.8,10.8 0 0 1 354.09,275.35Z" fill="#f3a460" stroke="#d07a30" stroke-width="0.6"/><path d="M364.1,279.4 L354.09,275.35 A10.8,10.8 0 0 1 354.65,274.16Z" fill="#62d2f2" stroke="#30a0c8" stroke-width="0.6"/><path d="M364.1,279.4 L354.65,274.16 A10.8,10.8 0 0 1 356.07,272.17Z" fill="#ec6e68" stroke="#c04848" stroke-width="0.6"/><path d="M364.1,279.4 L356.07,272.17 A10.8,10.8 0 0 1 357.45,270.89Z" fill="#44c4a2" stroke="#20907a" stroke-width="0.6"/><path d="M364.1,279.4 L357.45,270.89 A10.8,10.8 0 0 1 358.70,270.05Z" fill="#e8a040" stroke="#b87020" stroke-width="0.6"/><path d="M364.1,279.4 L358.70,270.05 A10.8,10.8 0 0 1 360.05,269.39Z" fill="#d060c0" stroke="#a04090" stroke-width="0.6"/><path d="M364.1,279.4 L360.05,269.39 A10.8,10.8 0 0 1 361.30,268.97Z" fill="#9a70d8" stroke="#6a40b0" stroke-width="0.6"/><path d="M364.1,279.4 L361.30,268.97 A10.8,10.8 0 0 1 362.60,268.71Z" fill="#2f8e46" stroke="#1e6430" stroke-width="0.6"/><path d="M364.1,279.4 L362.60,268.71 A10.8,10.8 0 0 1 363.72,268.61Z" fill="#23285e" stroke="#151a40" stroke-width="0.6"/></g><circle cx="364.1" cy="279.4" r="10.8" fill="none" stroke="#3a5ecc" stroke-width="1"/><circle cx="468" cy="228.4" r="10.1" fill="#fffef8" opacity="0.85"/><g opacity="1"><path d="M468,228.4 L468.48,219.21 A9.2,9.2 0 0 1 477.06,230.00Z" fill="#88aee0" stroke="#3f6cc0" stroke-width="0.6"/><path d="M468,228.4 L477.06,230.00 A9.2,9.2 0 0 1 467.52,237.59Z" fill="#94aef0" stroke="#4a68d0" stroke-width="0.6"/><path d="M468,228.4 L467.52,237.59 A9.2,9.2 0 0 1 459.60,232.14Z" fill="#c4b2ee" stroke="#8068cc" stroke-width="0.6"/><path d="M468,228.4 L459.60,232.14 A9.2,9.2 0 0 1 459.16,225.86Z" fill="#78a2ec" stroke="#3f68cc" stroke-width="0.6"/><path d="M468,228.4 L459.16,225.86 A9.2,9.2 0 0 1 459.80,224.22Z" fill="#f3a460" stroke="#d07a30" stroke-width="0.6"/><path d="M468,228.4 L459.80,224.22 A9.2,9.2 0 0 1 460.37,223.26Z" fill="#62d2f2" stroke="#30a0c8" stroke-width="0.6"/><path d="M468,228.4 L460.37,223.26 A9.2,9.2 0 0 1 461.73,221.67Z" fill="#ec6e68" stroke="#c04848" stroke-width="0.6"/><path d="M468,228.4 L461.73,221.67 A9.2,9.2 0 0 1 462.99,220.68Z" fill="#44c4a2" stroke="#20907a" stroke-width="0.6"/><path d="M468,228.4 L462.99,220.68 A9.2,9.2 0 0 1 464.11,220.06Z" fill="#e8a040" stroke="#b87020" stroke-width="0.6"/><path d="M468,228.4 L464.11,220.06 A9.2,9.2 0 0 1 465.31,219.60Z" fill="#d060c0" stroke="#a04090" stroke-width="0.6"/><path d="M468,228.4 L465.31,219.60 A9.2,9.2 0 0 1 466.40,219.34Z" fill="#9a70d8" stroke="#6a40b0" stroke-width="0.6"/><path d="M468,228.4 L466.40,219.34 A9.2,9.2 0 0 1 467.52,219.21Z" fill="#2f8e46" stroke="#1e6430" stroke-width="0.6"/><path d="M468,228.4 L467.52,219.21 A9.2,9.2 0 0 1 468.48,219.21Z" fill="#23285e" stroke="#151a40" stroke-width="0.6"/></g><circle cx="468" cy="228.4" r="9.2" fill="none" stroke="#3a5ecc" stroke-width="1"/><circle cx="543.6" cy="237.2" r="12.5" fill="#fffef8" opacity="0.85"/><g opacity="1"><path d="M543.6,237.2 L542.79,225.63 A11.6,11.6 0 0 1 555.18,237.81Z" fill="#88aee0" stroke="#3f6cc0" stroke-width="0.6"/><path d="M543.6,237.2 L555.18,237.81 A11.6,11.6 0 0 1 544.41,248.77Z" fill="#94aef0" stroke="#4a68d0" stroke-width="0.6"/><path d="M543.6,237.2 L544.41,248.77 A11.6,11.6 0 0 1 533.66,243.17Z" fill="#c4b2ee" stroke="#8068cc" stroke-width="0.6"/><path d="M543.6,237.2 L533.66,243.17 A11.6,11.6 0 0 1 532.14,235.39Z" fill="#78a2ec" stroke="#3f68cc" stroke-width="0.6"/><path d="M543.6,237.2 L532.14,235.39 A11.6,11.6 0 0 1 532.70,233.23Z" fill="#f3a460" stroke="#d07a30" stroke-width="0.6"/><path d="M543.6,237.2 L532.70,233.23 A11.6,11.6 0 0 1 533.26,231.93Z" fill="#62d2f2" stroke="#30a0c8" stroke-width="0.6"/><path d="M543.6,237.2 L533.26,231.93 A11.6,11.6 0 0 1 534.71,229.74Z" fill="#ec6e68" stroke="#c04848" stroke-width="0.6"/><path d="M543.6,237.2 L534.71,229.74 A11.6,11.6 0 0 1 536.14,228.31Z" fill="#44c4a2" stroke="#20907a" stroke-width="0.6"/><path d="M543.6,237.2 L536.14,228.31 A11.6,11.6 0 0 1 537.45,227.36Z" fill="#e8a040" stroke="#b87020" stroke-width="0.6"/><path d="M543.6,237.2 L537.45,227.36 A11.6,11.6 0 0 1 538.88,226.60Z" fill="#d060c0" stroke="#a04090" stroke-width="0.6"/><path d="M543.6,237.2 L538.88,226.60 A11.6,11.6 0 0 1 540.21,226.11Z" fill="#9a70d8" stroke="#6a40b0" stroke-width="0.6"/><path d="M543.6,237.2 L540.21,226.11 A11.6,11.6 0 0 1 541.59,225.78Z" fill="#2f8e46" stroke="#1e6430" stroke-width="0.6"/><path d="M543.6,237.2 L541.59,225.78 A11.6,11.6 0 0 1 542.79,225.63Z" fill="#23285e" stroke="#151a40" stroke-width="0.6"/></g><circle cx="543.6" cy="237.2" r="11.6" fill="none" stroke="#3a5ecc" stroke-width="1"/><circle cx="470" cy="257.8" r="11.0" fill="#fffef8" opacity="0.85"/><g opacity="1"><path d="M470,257.8 L470.18,247.70 A10.1,10.1 0 0 1 480.00,259.21Z" fill="#88aee0" stroke="#3f6cc0" stroke-width="0.6"/><path d="M470,257.8 L480.00,259.21 A10.1,10.1 0 0 1 469.82,267.90Z" fill="#94aef0" stroke="#4a68d0" stroke-width="0.6"/><path d="M470,257.8 L469.82,267.90 A10.1,10.1 0 0 1 460.92,262.23Z" fill="#c4b2ee" stroke="#8068cc" stroke-width="0.6"/><path d="M470,257.8 L460.92,262.23 A10.1,10.1 0 0 1 460.20,255.36Z" fill="#78a2ec" stroke="#3f68cc" stroke-width="0.6"/><path d="M470,257.8 L460.20,255.36 A10.1,10.1 0 0 1 460.85,253.53Z" fill="#f3a460" stroke="#d07a30" stroke-width="0.6"/><path d="M470,257.8 L460.85,253.53 A10.1,10.1 0 0 1 461.43,252.45Z" fill="#62d2f2" stroke="#30a0c8" stroke-width="0.6"/><path d="M470,257.8 L461.43,252.45 A10.1,10.1 0 0 1 462.86,250.66Z" fill="#ec6e68" stroke="#c04848" stroke-width="0.6"/><path d="M470,257.8 L462.86,250.66 A10.1,10.1 0 0 1 464.21,249.53Z" fill="#44c4a2" stroke="#20907a" stroke-width="0.6"/><path d="M470,257.8 L464.21,249.53 A10.1,10.1 0 0 1 465.41,248.80Z" fill="#e8a040" stroke="#b87020" stroke-width="0.6"/><path d="M470,257.8 L465.41,248.80 A10.1,10.1 0 0 1 466.71,248.25Z" fill="#d060c0" stroke="#a04090" stroke-width="0.6"/><path d="M470,257.8 L466.71,248.25 A10.1,10.1 0 0 1 467.90,247.92Z" fill="#9a70d8" stroke="#6a40b0" stroke-width="0.6"/><path d="M470,257.8 L467.90,247.92 A10.1,10.1 0 0 1 469.12,247.74Z" fill="#2f8e46" stroke="#1e6430" stroke-width="0.6"/><path d="M470,257.8 L469.12,247.74 A10.1,10.1 0 0 1 470.18,247.70Z" fill="#23285e" stroke="#151a40" stroke-width="0.6"/></g><circle cx="470" cy="257.8" r="10.1" fill="none" stroke="#3a5ecc" stroke-width="1"/><circle cx="492.3" cy="142.6" r="7.9" fill="#fffef8" opacity="0.85"/><g opacity="1"><path d="M492.3,142.6 L491.57,135.64 A7,7 0 0 1 499.30,142.72Z" fill="#88aee0" stroke="#3f6cc0" stroke-width="0.6"/><path d="M492.3,142.6 L499.30,142.72 A7,7 0 0 1 493.03,149.56Z" fill="#94aef0" stroke="#4a68d0" stroke-width="0.6"/><path d="M492.3,142.6 L493.03,149.56 A7,7 0 0 1 486.43,146.41Z" fill="#c4b2ee" stroke="#8068cc" stroke-width="0.6"/><path d="M492.3,142.6 L486.43,146.41 A7,7 0 0 1 485.35,141.75Z" fill="#78a2ec" stroke="#3f68cc" stroke-width="0.6"/><path d="M492.3,142.6 L485.35,141.75 A7,7 0 0 1 485.64,140.44Z" fill="#f3a460" stroke="#d07a30" stroke-width="0.6"/><path d="M492.3,142.6 L485.64,140.44 A7,7 0 0 1 485.96,139.64Z" fill="#62d2f2" stroke="#30a0c8" stroke-width="0.6"/><path d="M492.3,142.6 L485.96,139.64 A7,7 0 0 1 486.78,138.29Z" fill="#ec6e68" stroke="#c04848" stroke-width="0.6"/><path d="M492.3,142.6 L486.78,138.29 A7,7 0 0 1 487.62,137.40Z" fill="#44c4a2" stroke="#20907a" stroke-width="0.6"/><path d="M492.3,142.6 L487.62,137.40 A7,7 0 0 1 488.39,136.80Z" fill="#e8a040" stroke="#b87020" stroke-width="0.6"/><path d="M492.3,142.6 L488.39,136.80 A7,7 0 0 1 489.23,136.31Z" fill="#d060c0" stroke="#a04090" stroke-width="0.6"/><path d="M492.3,142.6 L489.23,136.31 A7,7 0 0 1 490.02,135.98Z" fill="#9a70d8" stroke="#6a40b0" stroke-width="0.6"/><path d="M492.3,142.6 L490.02,135.98 A7,7 0 0 1 490.84,135.75Z" fill="#2f8e46" stroke="#1e6430" stroke-width="0.6"/><path d="M492.3,142.6 L490.84,135.75 A7,7 0 0 1 491.57,135.64Z" fill="#23285e" stroke="#151a40" stroke-width="0.6"/></g><circle cx="492.3" cy="142.6" r="7" fill="none" stroke="#3a5ecc" stroke-width="1"/><circle cx="276.1" cy="300.6" r="8.7" fill="#fffef8" opacity="0.85"/><g opacity="1"><path d="M276.1,300.6 L275.96,292.80 A7.8,7.8 0 0 1 283.86,301.42Z" fill="#88aee0" stroke="#3f6cc0" stroke-width="0.6"/><path d="M276.1,300.6 L283.86,301.42 A7.8,7.8 0 0 1 276.24,308.40Z" fill="#94aef0" stroke="#4a68d0" stroke-width="0.6"/><path d="M276.1,300.6 L276.24,308.40 A7.8,7.8 0 0 1 269.21,304.26Z" fill="#c4b2ee" stroke="#8068cc" stroke-width="0.6"/><path d="M276.1,300.6 L269.21,304.26 A7.8,7.8 0 0 1 268.47,298.98Z" fill="#78a2ec" stroke="#3f68cc" stroke-width="0.6"/><path d="M276.1,300.6 L268.47,298.98 A7.8,7.8 0 0 1 268.92,297.55Z" fill="#f3a460" stroke="#d07a30" stroke-width="0.6"/><path d="M276.1,300.6 L268.92,297.55 A7.8,7.8 0 0 1 269.35,296.70Z" fill="#62d2f2" stroke="#30a0c8" stroke-width="0.6"/><path d="M276.1,300.6 L269.35,296.70 A7.8,7.8 0 0 1 270.40,295.28Z" fill="#ec6e68" stroke="#c04848" stroke-width="0.6"/><path d="M276.1,300.6 L270.40,295.28 A7.8,7.8 0 0 1 271.41,294.37Z" fill="#44c4a2" stroke="#20907a" stroke-width="0.6"/><path d="M276.1,300.6 L271.41,294.37 A7.8,7.8 0 0 1 272.32,293.78Z" fill="#e8a040" stroke="#b87020" stroke-width="0.6"/><path d="M276.1,300.6 L272.32,293.78 A7.8,7.8 0 0 1 273.30,293.32Z" fill="#d060c0" stroke="#a04090" stroke-width="0.6"/><path d="M276.1,300.6 L273.30,293.32 A7.8,7.8 0 0 1 274.21,293.03Z" fill="#9a70d8" stroke="#6a40b0" stroke-width="0.6"/><path d="M276.1,300.6 L274.21,293.03 A7.8,7.8 0 0 1 275.15,292.86Z" fill="#2f8e46" stroke="#1e6430" stroke-width="0.6"/><path d="M276.1,300.6 L275.15,292.86 A7.8,7.8 0 0 1 275.96,292.80Z" fill="#23285e" stroke="#151a40" stroke-width="0.6"/></g><circle cx="276.1" cy="300.6" r="7.8" fill="none" stroke="#3a5ecc" stroke-width="1"/><circle cx="340.9" cy="317.1" r="13.5" fill="#fffef8" opacity="0.85"/><g opacity="1"><path d="M340.9,317.1 L341.78,304.53 A12.6,12.6 0 0 1 353.27,319.50Z" fill="#88aee0" stroke="#3f6cc0" stroke-width="0.6"/><path d="M340.9,317.1 L353.27,319.50 A12.6,12.6 0 0 1 340.02,329.67Z" fill="#94aef0" stroke="#4a68d0" stroke-width="0.6"/><path d="M340.9,317.1 L340.02,329.67 A12.6,12.6 0 0 1 329.30,322.02Z" fill="#c4b2ee" stroke="#8068cc" stroke-width="0.6"/><path d="M340.9,317.1 L329.30,322.02 A12.6,12.6 0 0 1 328.85,313.42Z" fill="#78a2ec" stroke="#3f68cc" stroke-width="0.6"/><path d="M340.9,317.1 L328.85,313.42 A12.6,12.6 0 0 1 329.77,311.18Z" fill="#f3a460" stroke="#d07a30" stroke-width="0.6"/><path d="M340.9,317.1 L329.77,311.18 A12.6,12.6 0 0 1 330.58,309.87Z" fill="#62d2f2" stroke="#30a0c8" stroke-width="0.6"/><path d="M340.9,317.1 L330.58,309.87 A12.6,12.6 0 0 1 332.47,307.74Z" fill="#ec6e68" stroke="#c04848" stroke-width="0.6"/><path d="M340.9,317.1 L332.47,307.74 A12.6,12.6 0 0 1 334.22,306.41Z" fill="#44c4a2" stroke="#20907a" stroke-width="0.6"/><path d="M340.9,317.1 L334.22,306.41 A12.6,12.6 0 0 1 335.78,305.59Z" fill="#e8a040" stroke="#b87020" stroke-width="0.6"/><path d="M340.9,317.1 L335.78,305.59 A12.6,12.6 0 0 1 337.43,304.99Z" fill="#d060c0" stroke="#a04090" stroke-width="0.6"/><path d="M340.9,317.1 L337.43,304.99 A12.6,12.6 0 0 1 338.93,304.66Z" fill="#9a70d8" stroke="#6a40b0" stroke-width="0.6"/><path d="M340.9,317.1 L338.93,304.66 A12.6,12.6 0 0 1 340.46,304.51Z" fill="#2f8e46" stroke="#1e6430" stroke-width="0.6"/><path d="M340.9,317.1 L340.46,304.51 A12.6,12.6 0 0 1 341.78,304.53Z" fill="#23285e" stroke="#151a40" stroke-width="0.6"/></g><circle cx="340.9" cy="317.1" r="12.6" fill="none" stroke="#3a5ecc" stroke-width="1"/><circle cx="335.4" cy="360.6" r="12.3" fill="#fffef8" opacity="0.85"/><g opacity="1"><path d="M335.4,360.6 L334.80,349.22 A11.4,11.4 0 0 1 346.77,361.40Z" fill="#88aee0" stroke="#3f6cc0" stroke-width="0.6"/><path d="M335.4,360.6 L346.77,361.40 A11.4,11.4 0 0 1 336.00,371.98Z" fill="#94aef0" stroke="#4a68d0" stroke-width="0.6"/><path d="M335.4,360.6 L336.00,371.98 A11.4,11.4 0 0 1 325.53,366.30Z" fill="#c4b2ee" stroke="#8068cc" stroke-width="0.6"/><path d="M335.4,360.6 L325.53,366.30 A11.4,11.4 0 0 1 324.17,358.62Z" fill="#78a2ec" stroke="#3f68cc" stroke-width="0.6"/><path d="M335.4,360.6 L324.17,358.62 A11.4,11.4 0 0 1 324.76,356.51Z" fill="#f3a460" stroke="#d07a30" stroke-width="0.6"/><path d="M335.4,360.6 L324.76,356.51 A11.4,11.4 0 0 1 325.33,355.25Z" fill="#62d2f2" stroke="#30a0c8" stroke-width="0.6"/><path d="M335.4,360.6 L325.33,355.25 A11.4,11.4 0 0 1 326.80,353.12Z" fill="#ec6e68" stroke="#c04848" stroke-width="0.6"/><path d="M335.4,360.6 L326.80,353.12 A11.4,11.4 0 0 1 328.23,351.74Z" fill="#44c4a2" stroke="#20907a" stroke-width="0.6"/><path d="M335.4,360.6 L328.23,351.74 A11.4,11.4 0 0 1 329.53,350.83Z" fill="#e8a040" stroke="#b87020" stroke-width="0.6"/><path d="M335.4,360.6 L329.53,350.83 A11.4,11.4 0 0 1 330.95,350.11Z" fill="#d060c0" stroke="#a04090" stroke-width="0.6"/><path d="M335.4,360.6 L330.95,350.11 A11.4,11.4 0 0 1 332.26,349.64Z" fill="#9a70d8" stroke="#6a40b0" stroke-width="0.6"/><path d="M335.4,360.6 L332.26,349.64 A11.4,11.4 0 0 1 333.62,349.34Z" fill="#2f8e46" stroke="#1e6430" stroke-width="0.6"/><path d="M335.4,360.6 L333.62,349.34 A11.4,11.4 0 0 1 334.80,349.22Z" fill="#23285e" stroke="#151a40" stroke-width="0.6"/></g><circle cx="335.4" cy="360.6" r="11.4" fill="none" stroke="#3a5ecc" stroke-width="1"/><circle cx="291.2" cy="363.8" r="7.800000000000001" fill="#fffef8" opacity="0.85"/><g opacity="1"><path d="M291.2,363.8 L291.44,356.90 A6.9,6.9 0 0 1 298.02,364.88Z" fill="#88aee0" stroke="#3f6cc0" stroke-width="0.6"/><path d="M291.2,363.8 L298.02,364.88 A6.9,6.9 0 0 1 290.96,370.70Z" fill="#94aef0" stroke="#4a68d0" stroke-width="0.6"/><path d="M291.2,363.8 L290.96,370.70 A6.9,6.9 0 0 1 284.95,366.72Z" fill="#c4b2ee" stroke="#8068cc" stroke-width="0.6"/><path d="M291.2,363.8 L284.95,366.72 A6.9,6.9 0 0 1 284.54,362.01Z" fill="#78a2ec" stroke="#3f68cc" stroke-width="0.6"/><path d="M291.2,363.8 L284.54,362.01 A6.9,6.9 0 0 1 285.00,360.78Z" fill="#f3a460" stroke="#d07a30" stroke-width="0.6"/><path d="M291.2,363.8 L285.00,360.78 A6.9,6.9 0 0 1 285.41,360.04Z" fill="#62d2f2" stroke="#30a0c8" stroke-width="0.6"/><path d="M291.2,363.8 L285.41,360.04 A6.9,6.9 0 0 1 286.41,358.84Z" fill="#ec6e68" stroke="#c04848" stroke-width="0.6"/><path d="M291.2,363.8 L286.41,358.84 A6.9,6.9 0 0 1 287.34,358.08Z" fill="#44c4a2" stroke="#20907a" stroke-width="0.6"/><path d="M291.2,363.8 L287.34,358.08 A6.9,6.9 0 0 1 288.18,357.60Z" fill="#e8a040" stroke="#b87020" stroke-width="0.6"/><path d="M291.2,363.8 L288.18,357.60 A6.9,6.9 0 0 1 289.07,357.24Z" fill="#d060c0" stroke="#a04090" stroke-width="0.6"/><path d="M291.2,363.8 L289.07,357.24 A6.9,6.9 0 0 1 289.88,357.03Z" fill="#9a70d8" stroke="#6a40b0" stroke-width="0.6"/><path d="M291.2,363.8 L289.88,357.03 A6.9,6.9 0 0 1 290.72,356.92Z" fill="#2f8e46" stroke="#1e6430" stroke-width="0.6"/><path d="M291.2,363.8 L290.72,356.92 A6.9,6.9 0 0 1 291.44,356.90Z" fill="#23285e" stroke="#151a40" stroke-width="0.6"/></g><circle cx="291.2" cy="363.8" r="6.9" fill="none" stroke="#3a5ecc" stroke-width="1"/><circle cx="432.3" cy="289" r="11.700000000000001" fill="#fffef8" opacity="0.85"/><g opacity="1"><path d="M432.3,289 L431.36,278.24 A10.8,10.8 0 0 1 443.09,289.38Z" fill="#88aee0" stroke="#3f6cc0" stroke-width="0.6"/><path d="M432.3,289 L443.09,289.38 A10.8,10.8 0 0 1 433.24,299.76Z" fill="#94aef0" stroke="#4a68d0" stroke-width="0.6"/><path d="M432.3,289 L433.24,299.76 A10.8,10.8 0 0 1 423.14,294.72Z" fill="#c4b2ee" stroke="#8068cc" stroke-width="0.6"/><path d="M432.3,289 L423.14,294.72 A10.8,10.8 0 0 1 421.61,287.50Z" fill="#78a2ec" stroke="#3f68cc" stroke-width="0.6"/><path d="M432.3,289 L421.61,287.50 A10.8,10.8 0 0 1 422.09,285.48Z" fill="#f3a460" stroke="#d07a30" stroke-width="0.6"/><path d="M432.3,289 L422.09,285.48 A10.8,10.8 0 0 1 422.59,284.27Z" fill="#62d2f2" stroke="#30a0c8" stroke-width="0.6"/><path d="M432.3,289 L422.59,284.27 A10.8,10.8 0 0 1 423.91,282.20Z" fill="#ec6e68" stroke="#c04848" stroke-width="0.6"/><path d="M432.3,289 L423.91,282.20 A10.8,10.8 0 0 1 425.21,280.85Z" fill="#44c4a2" stroke="#20907a" stroke-width="0.6"/><path d="M432.3,289 L425.21,280.85 A10.8,10.8 0 0 1 426.42,279.94Z" fill="#e8a040" stroke="#b87020" stroke-width="0.6"/><path d="M432.3,289 L426.42,279.94 A10.8,10.8 0 0 1 427.74,279.21Z" fill="#d060c0" stroke="#a04090" stroke-width="0.6"/><path d="M432.3,289 L427.74,279.21 A10.8,10.8 0 0 1 428.96,278.73Z" fill="#9a70d8" stroke="#6a40b0" stroke-width="0.6"/><path d="M432.3,289 L428.96,278.73 A10.8,10.8 0 0 1 430.24,278.40Z" fill="#2f8e46" stroke="#1e6430" stroke-width="0.6"/><path d="M432.3,289 L430.24,278.40 A10.8,10.8 0 0 1 431.36,278.24Z" fill="#23285e" stroke="#151a40" stroke-width="0.6"/></g><circle cx="432.3" cy="289" r="10.8" fill="none" stroke="#3a5ecc" stroke-width="1"/><circle cx="471.5" cy="298.7" r="10.700000000000001" fill="#fffef8" opacity="0.85"/><g opacity="1"><path d="M471.5,298.7 L471.50,288.90 A9.8,9.8 0 0 1 481.23,299.89Z" fill="#88aee0" stroke="#3f6cc0" stroke-width="0.6"/><path d="M471.5,298.7 L481.23,299.89 A9.8,9.8 0 0 1 471.50,308.50Z" fill="#94aef0" stroke="#4a68d0" stroke-width="0.6"/><path d="M471.5,298.7 L471.50,308.50 A9.8,9.8 0 0 1 462.77,303.15Z" fill="#c4b2ee" stroke="#8068cc" stroke-width="0.6"/><path d="M471.5,298.7 L462.77,303.15 A9.8,9.8 0 0 1 461.95,296.50Z" fill="#78a2ec" stroke="#3f68cc" stroke-width="0.6"/><path d="M471.5,298.7 L461.95,296.50 A9.8,9.8 0 0 1 462.55,294.71Z" fill="#f3a460" stroke="#d07a30" stroke-width="0.6"/><path d="M471.5,298.7 L462.55,294.71 A9.8,9.8 0 0 1 463.10,293.65Z" fill="#62d2f2" stroke="#30a0c8" stroke-width="0.6"/><path d="M471.5,298.7 L463.10,293.65 A9.8,9.8 0 0 1 464.45,291.89Z" fill="#ec6e68" stroke="#c04848" stroke-width="0.6"/><path d="M471.5,298.7 L464.45,291.89 A9.8,9.8 0 0 1 465.74,290.77Z" fill="#44c4a2" stroke="#20907a" stroke-width="0.6"/><path d="M471.5,298.7 L465.74,290.77 A9.8,9.8 0 0 1 466.90,290.05Z" fill="#e8a040" stroke="#b87020" stroke-width="0.6"/><path d="M471.5,298.7 L466.90,290.05 A9.8,9.8 0 0 1 468.15,289.49Z" fill="#d060c0" stroke="#a04090" stroke-width="0.6"/><path d="M471.5,298.7 L468.15,289.49 A9.8,9.8 0 0 1 469.30,289.15Z" fill="#9a70d8" stroke="#6a40b0" stroke-width="0.6"/><path d="M471.5,298.7 L469.30,289.15 A9.8,9.8 0 0 1 470.48,288.95Z" fill="#2f8e46" stroke="#1e6430" stroke-width="0.6"/><path d="M471.5,298.7 L470.48,288.95 A9.8,9.8 0 0 1 471.50,288.90Z" fill="#23285e" stroke="#151a40" stroke-width="0.6"/></g><circle cx="471.5" cy="298.7" r="9.8" fill="none" stroke="#3a5ecc" stroke-width="1"/><circle cx="525.2" cy="293.4" r="11.4" fill="#fffef8" opacity="0.85"/><g opacity="1"><path d="M525.2,293.4 L526.12,282.94 A10.5,10.5 0 0 1 535.47,295.58Z" fill="#88aee0" stroke="#3f6cc0" stroke-width="0.6"/><path d="M525.2,293.4 L535.47,295.58 A10.5,10.5 0 0 1 524.28,303.86Z" fill="#94aef0" stroke="#4a68d0" stroke-width="0.6"/><path d="M525.2,293.4 L524.28,303.86 A10.5,10.5 0 0 1 515.46,297.33Z" fill="#c4b2ee" stroke="#8068cc" stroke-width="0.6"/><path d="M525.2,293.4 L515.46,297.33 A10.5,10.5 0 0 1 515.21,290.16Z" fill="#78a2ec" stroke="#3f68cc" stroke-width="0.6"/><path d="M525.2,293.4 L515.21,290.16 A10.5,10.5 0 0 1 516.02,288.31Z" fill="#f3a460" stroke="#d07a30" stroke-width="0.6"/><path d="M525.2,293.4 L516.02,288.31 A10.5,10.5 0 0 1 516.71,287.23Z" fill="#62d2f2" stroke="#30a0c8" stroke-width="0.6"/><path d="M525.2,293.4 L516.71,287.23 A10.5,10.5 0 0 1 518.31,285.48Z" fill="#ec6e68" stroke="#c04848" stroke-width="0.6"/><path d="M525.2,293.4 L518.31,285.48 A10.5,10.5 0 0 1 519.79,284.40Z" fill="#44c4a2" stroke="#20907a" stroke-width="0.6"/><path d="M525.2,293.4 L519.79,284.40 A10.5,10.5 0 0 1 521.10,283.73Z" fill="#e8a040" stroke="#b87020" stroke-width="0.6"/><path d="M525.2,293.4 L521.10,283.73 A10.5,10.5 0 0 1 522.48,283.26Z" fill="#d060c0" stroke="#a04090" stroke-width="0.6"/><path d="M525.2,293.4 L522.48,283.26 A10.5,10.5 0 0 1 523.74,283.00Z" fill="#9a70d8" stroke="#6a40b0" stroke-width="0.6"/><path d="M525.2,293.4 L523.74,283.00 A10.5,10.5 0 0 1 525.02,282.90Z" fill="#2f8e46" stroke="#1e6430" stroke-width="0.6"/><path d="M525.2,293.4 L525.02,282.90 A10.5,10.5 0 0 1 526.12,282.94Z" fill="#23285e" stroke="#151a40" stroke-width="0.6"/></g><circle cx="525.2" cy="293.4" r="10.5" fill="none" stroke="#3a5ecc" stroke-width="1"/><circle cx="570.5" cy="307.7" r="9.6" fill="#fffef8" opacity="0.85"/><g opacity="1"><path d="M570.5,307.7 L570.20,299.01 A8.7,8.7 0 0 1 579.17,308.46Z" fill="#88aee0" stroke="#3f6cc0" stroke-width="0.6"/><path d="M570.5,307.7 L579.17,308.46 A8.7,8.7 0 0 1 570.80,316.39Z" fill="#94aef0" stroke="#4a68d0" stroke-width="0.6"/><path d="M570.5,307.7 L570.80,316.39 A8.7,8.7 0 0 1 562.89,311.92Z" fill="#c4b2ee" stroke="#8068cc" stroke-width="0.6"/><path d="M570.5,307.7 L562.89,311.92 A8.7,8.7 0 0 1 561.96,306.04Z" fill="#78a2ec" stroke="#3f68cc" stroke-width="0.6"/><path d="M570.5,307.7 L561.96,306.04 A8.7,8.7 0 0 1 562.43,304.44Z" fill="#f3a460" stroke="#d07a30" stroke-width="0.6"/><path d="M570.5,307.7 L562.43,304.44 A8.7,8.7 0 0 1 562.89,303.48Z" fill="#62d2f2" stroke="#30a0c8" stroke-width="0.6"/><path d="M570.5,307.7 L562.89,303.48 A8.7,8.7 0 0 1 564.03,301.88Z" fill="#ec6e68" stroke="#c04848" stroke-width="0.6"/><path d="M570.5,307.7 L564.03,301.88 A8.7,8.7 0 0 1 565.14,300.84Z" fill="#44c4a2" stroke="#20907a" stroke-width="0.6"/><path d="M570.5,307.7 L565.14,300.84 A8.7,8.7 0 0 1 566.15,300.17Z" fill="#e8a040" stroke="#b87020" stroke-width="0.6"/><path d="M570.5,307.7 L566.15,300.17 A8.7,8.7 0 0 1 567.24,299.63Z" fill="#d060c0" stroke="#a04090" stroke-width="0.6"/><path d="M570.5,307.7 L567.24,299.63 A8.7,8.7 0 0 1 568.25,299.30Z" fill="#9a70d8" stroke="#6a40b0" stroke-width="0.6"/><path d="M570.5,307.7 L568.25,299.30 A8.7,8.7 0 0 1 569.29,299.08Z" fill="#2f8e46" stroke="#1e6430" stroke-width="0.6"/><path d="M570.5,307.7 L569.29,299.08 A8.7,8.7 0 0 1 570.20,299.01Z" fill="#23285e" stroke="#151a40" stroke-width="0.6"/></g><circle cx="570.5" cy="307.7" r="8.7" fill="none" stroke="#3a5ecc" stroke-width="1"/><circle cx="445.6" cy="343.2" r="8.5" fill="#fffef8" opacity="0.85"/><g opacity="1"><path d="M445.6,343.2 L446.00,335.61 A7.6,7.6 0 0 1 453.08,344.52Z" fill="#88aee0" stroke="#3f6cc0" stroke-width="0.6"/><path d="M445.6,343.2 L453.08,344.52 A7.6,7.6 0 0 1 445.20,350.79Z" fill="#94aef0" stroke="#4a68d0" stroke-width="0.6"/><path d="M445.6,343.2 L445.20,350.79 A7.6,7.6 0 0 1 438.66,346.29Z" fill="#c4b2ee" stroke="#8068cc" stroke-width="0.6"/><path d="M445.6,343.2 L438.66,346.29 A7.6,7.6 0 0 1 438.29,341.11Z" fill="#78a2ec" stroke="#3f68cc" stroke-width="0.6"/><path d="M445.6,343.2 L438.29,341.11 A7.6,7.6 0 0 1 438.83,339.75Z" fill="#f3a460" stroke="#d07a30" stroke-width="0.6"/><path d="M445.6,343.2 L438.83,339.75 A7.6,7.6 0 0 1 439.30,338.95Z" fill="#62d2f2" stroke="#30a0c8" stroke-width="0.6"/><path d="M445.6,343.2 L439.30,338.95 A7.6,7.6 0 0 1 440.42,337.64Z" fill="#ec6e68" stroke="#c04848" stroke-width="0.6"/><path d="M445.6,343.2 L440.42,337.64 A7.6,7.6 0 0 1 441.46,336.83Z" fill="#44c4a2" stroke="#20907a" stroke-width="0.6"/><path d="M445.6,343.2 L441.46,336.83 A7.6,7.6 0 0 1 442.39,336.31Z" fill="#e8a040" stroke="#b87020" stroke-width="0.6"/><path d="M445.6,343.2 L442.39,336.31 A7.6,7.6 0 0 1 443.38,335.93Z" fill="#d060c0" stroke="#a04090" stroke-width="0.6"/><path d="M445.6,343.2 L443.38,335.93 A7.6,7.6 0 0 1 444.28,335.72Z" fill="#9a70d8" stroke="#6a40b0" stroke-width="0.6"/><path d="M445.6,343.2 L444.28,335.72 A7.6,7.6 0 0 1 445.20,335.61Z" fill="#2f8e46" stroke="#1e6430" stroke-width="0.6"/><path d="M445.6,343.2 L445.20,335.61 A7.6,7.6 0 0 1 446.00,335.61Z" fill="#23285e" stroke="#151a40" stroke-width="0.6"/></g><circle cx="445.6" cy="343.2" r="7.6" fill="none" stroke="#3a5ecc" stroke-width="1"/><circle cx="508.8" cy="377.8" r="9.8" fill="#fffef8" opacity="0.85"/><g opacity="1"><path d="M508.8,377.8 L508.18,368.92 A8.9,8.9 0 0 1 517.69,378.27Z" fill="#88aee0" stroke="#3f6cc0" stroke-width="0.6"/><path d="M508.8,377.8 L517.69,378.27 A8.9,8.9 0 0 1 509.42,386.68Z" fill="#94aef0" stroke="#4a68d0" stroke-width="0.6"/><path d="M508.8,377.8 L509.42,386.68 A8.9,8.9 0 0 1 501.17,382.38Z" fill="#c4b2ee" stroke="#8068cc" stroke-width="0.6"/><path d="M508.8,377.8 L501.17,382.38 A8.9,8.9 0 0 1 500.01,376.41Z" fill="#78a2ec" stroke="#3f68cc" stroke-width="0.6"/><path d="M508.8,377.8 L500.01,376.41 A8.9,8.9 0 0 1 500.44,374.76Z" fill="#f3a460" stroke="#d07a30" stroke-width="0.6"/><path d="M508.8,377.8 L500.44,374.76 A8.9,8.9 0 0 1 500.87,373.76Z" fill="#62d2f2" stroke="#30a0c8" stroke-width="0.6"/><path d="M508.8,377.8 L500.87,373.76 A8.9,8.9 0 0 1 501.98,372.08Z" fill="#ec6e68" stroke="#c04848" stroke-width="0.6"/><path d="M508.8,377.8 L501.98,372.08 A8.9,8.9 0 0 1 503.08,370.98Z" fill="#44c4a2" stroke="#20907a" stroke-width="0.6"/><path d="M508.8,377.8 L503.08,370.98 A8.9,8.9 0 0 1 504.08,370.25Z" fill="#e8a040" stroke="#b87020" stroke-width="0.6"/><path d="M508.8,377.8 L504.08,370.25 A8.9,8.9 0 0 1 505.18,369.67Z" fill="#d060c0" stroke="#a04090" stroke-width="0.6"/><path d="M508.8,377.8 L505.18,369.67 A8.9,8.9 0 0 1 506.20,369.29Z" fill="#9a70d8" stroke="#6a40b0" stroke-width="0.6"/><path d="M508.8,377.8 L506.20,369.29 A8.9,8.9 0 0 1 507.25,369.04Z" fill="#2f8e46" stroke="#1e6430" stroke-width="0.6"/><path d="M508.8,377.8 L507.25,369.04 A8.9,8.9 0 0 1 508.18,368.92Z" fill="#23285e" stroke="#151a40" stroke-width="0.6"/></g><circle cx="508.8" cy="377.8" r="8.9" fill="none" stroke="#3a5ecc" stroke-width="1"/><circle cx="457.8" cy="386" r="10.6" fill="#fffef8" opacity="0.85"/><g opacity="1"><path d="M457.8,386 L457.97,376.30 A9.7,9.7 0 0 1 467.41,387.35Z" fill="#88aee0" stroke="#3f6cc0" stroke-width="0.6"/><path d="M457.8,386 L467.41,387.35 A9.7,9.7 0 0 1 457.63,395.70Z" fill="#94aef0" stroke="#4a68d0" stroke-width="0.6"/><path d="M457.8,386 L457.63,395.70 A9.7,9.7 0 0 1 449.08,390.25Z" fill="#c4b2ee" stroke="#8068cc" stroke-width="0.6"/><path d="M457.8,386 L449.08,390.25 A9.7,9.7 0 0 1 448.39,383.65Z" fill="#78a2ec" stroke="#3f68cc" stroke-width="0.6"/><path d="M457.8,386 L448.39,383.65 A9.7,9.7 0 0 1 449.01,381.90Z" fill="#f3a460" stroke="#d07a30" stroke-width="0.6"/><path d="M457.8,386 L449.01,381.90 A9.7,9.7 0 0 1 449.57,380.86Z" fill="#62d2f2" stroke="#30a0c8" stroke-width="0.6"/><path d="M457.8,386 L449.57,380.86 A9.7,9.7 0 0 1 450.94,379.14Z" fill="#ec6e68" stroke="#c04848" stroke-width="0.6"/><path d="M457.8,386 L450.94,379.14 A9.7,9.7 0 0 1 452.24,378.05Z" fill="#44c4a2" stroke="#20907a" stroke-width="0.6"/><path d="M457.8,386 L452.24,378.05 A9.7,9.7 0 0 1 453.40,377.36Z" fill="#e8a040" stroke="#b87020" stroke-width="0.6"/><path d="M457.8,386 L453.40,377.36 A9.7,9.7 0 0 1 454.64,376.83Z" fill="#d060c0" stroke="#a04090" stroke-width="0.6"/><path d="M457.8,386 L454.64,376.83 A9.7,9.7 0 0 1 455.78,376.51Z" fill="#9a70d8" stroke="#6a40b0" stroke-width="0.6"/><path d="M457.8,386 L455.78,376.51 A9.7,9.7 0 0 1 456.95,376.34Z" fill="#2f8e46" stroke="#1e6430" stroke-width="0.6"/><path d="M457.8,386 L456.95,376.34 A9.7,9.7 0 0 1 457.97,376.30Z" fill="#23285e" stroke="#151a40" stroke-width="0.6"/></g><circle cx="457.8" cy="386" r="9.7" fill="none" stroke="#3a5ecc" stroke-width="1"/><circle cx="415.7" cy="261" r="13.3" fill="#fffef8" opacity="0.85"/><g opacity="0.9"><path d="M415.7,261 L415.70,248.60 A12.4,12.4 0 0 1 415.70,273.40Z" fill="#9ab2f2" stroke="#4a68d0" stroke-width="0.6"/><path d="M415.7,261 L415.70,273.40 A12.4,12.4 0 0 1 403.31,261.43Z" fill="#c8aa58" stroke="#a08530" stroke-width="0.6"/><path d="M415.7,261 L403.31,261.43 A12.4,12.4 0 0 1 403.78,257.58Z" fill="#eaa070" stroke="#c07840" stroke-width="0.6"/><path d="M415.7,261 L403.78,257.58 A12.4,12.4 0 0 1 404.96,254.80Z" fill="#e4686a" stroke="#c04848" stroke-width="0.6"/><path d="M415.7,261 L404.96,254.80 A12.4,12.4 0 0 1 406.49,252.70Z" fill="#3fb6a0" stroke="#20907a" stroke-width="0.6"/><path d="M415.7,261 L406.49,252.70 A12.4,12.4 0 0 1 408.07,251.23Z" fill="#5a9ad8" stroke="#3a6ab0" stroke-width="0.6"/><path d="M415.7,261 L408.07,251.23 A12.4,12.4 0 0 1 410.26,249.85Z" fill="#7ea0e8" stroke="#4a6cd0" stroke-width="0.6"/><path d="M415.7,261 L410.26,249.85 A12.4,12.4 0 0 1 415.70,248.60Z" fill="#90aee8" stroke="#4a68d0" stroke-width="0.6"/></g><circle cx="415.7" cy="261" r="12.4" fill="none" stroke="#3a5ecc" stroke-width="1"/><text x="381" y="265.9" font-size="13" fill="#333" font-weight="normal" textLength="64.6" lengthAdjust="spacingAndGlyphs" opacity="0.85">Jacksonville</text><circle cx="390.8" cy="371.3" r="2.6" fill="#fff"/><path d="M390.8,368.7 A2.6,2.6 0 0 0 390.8,373.9Z" fill="#3a5ab8"/><path d="M390.8,368.7 A2.6,2.6 0 0 1 390.8,373.9Z" fill="#d04040"/><circle cx="551.5" cy="160.6" r="9.6" fill="#fff" stroke="#222" stroke-width="1.3"/><rect x="545.5" y="156" width="10" height="7.5" rx="1" fill="none" stroke="#333" stroke-width="0.9"/><path d="M552.5,159.5 L552.5,166 L554,164.5 L555.5,167 L556.5,166.5 L555.3,164 L557.3,163.8Z" fill="#fff" stroke="#222" stroke-width="0.6"/><rect x="281.2" y="399" width="2.6" height="2.6" fill="#f25022"/><rect x="284.1" y="399" width="2.6" height="2.6" fill="#7fba00"/><rect x="281.2" y="401.9" width="2.6" height="2.6" fill="#00a4ef"/><rect x="284.1" y="401.9" width="2.6" height="2.6" fill="#ffb900"/><text x="288" y="404" font-size="5.2" fill="#555" font-weight="normal" textLength="28" lengthAdjust="spacingAndGlyphs" >Microsoft Bing</text><text x="445.3" y="405.6" font-size="5.1" fill="#333" font-weight="normal" textLength="102.9" lengthAdjust="spacingAndGlyphs" stroke="#f6f4ef" stroke-width="1.1" paint-order="stroke" stroke-linejoin="round" >© 2025 TomTom, © 2025 Microsoft Corporation</text><text x="552.5" y="405.6" font-size="5.1" fill="#3060b0" font-weight="normal" textLength="13.1" lengthAdjust="spacingAndGlyphs" text-decoration="underline">Terms</text></g></svg><svg class="a" style="left:0;top:0" width="878" height="100" viewBox="0 0 878 100"><defs><linearGradient id="sky" x1="0" y1="0" x2="0" y2="1"><stop offset="0" stop-color="#8dbae8"/><stop offset="0.4" stop-color="#b4d0f0"/><stop offset="0.8" stop-color="#d6e3f1"/><stop offset="1" stop-color="#e2e9ef"/></linearGradient><filter id="bl" x="-50%" y="-50%" width="200%" height="200%"><feGaussianBlur stdDeviation="1.3"/></filter><filter id="bl2"><feGaussianBlur stdDeviation="0.4"/></filter><clipPath id="hc"><path d="M588,54 L788,54 L788,92.4 L566,92.4Z"/></clipPath></defs><g clip-path="url(#hc)"><rect x="560" y="54" width="230" height="39" fill="url(#sky)"/><ellipse cx="598" cy="70" rx="6" ry="5" fill="#fff" opacity="0.95" filter="url(#bl)"/><ellipse cx="604" cy="76" rx="8" ry="4" fill="#fff" opacity="0.8" filter="url(#bl)"/><ellipse cx="612" cy="64" rx="4" ry="3" fill="#fff" opacity="0.7" filter="url(#bl)"/><ellipse cx="618" cy="74" rx="8" ry="4" fill="#fff" opacity="0.9" filter="url(#bl)"/><ellipse cx="628" cy="70" rx="6" ry="3" fill="#fff" opacity="0.7" filter="url(#bl)"/><ellipse cx="622" cy="80" rx="6" ry="2.5" fill="#fff" opacity="0.7" filter="url(#bl)"/><ellipse cx="636" cy="58" rx="6" ry="2.5" fill="#fff" opacity="0.7" filter="url(#bl)"/><ellipse cx="632" cy="78" rx="5" ry="3" fill="#fff" opacity="0.8" filter="url(#bl)"/><ellipse cx="661" cy="60" rx="5" ry="3" fill="#fff" opacity="0.7" filter="url(#bl)"/><ellipse cx="666" cy="74" rx="3" ry="6" fill="#fff" opacity="0.6" filter="url(#bl)"/><ellipse cx="686" cy="62" rx="4" ry="4" fill="#fff" opacity="0.8" filter="url(#bl)"/><ellipse cx="688" cy="72" rx="5" ry="3" fill="#fff" opacity="0.7" filter="url(#bl)"/><ellipse cx="690" cy="80" rx="4" ry="3" fill="#fff" opacity="0.6" filter="url(#bl)"/><ellipse cx="712" cy="76" rx="8" ry="3" fill="#fff" opacity="0.6" filter="url(#bl)"/><ellipse cx="722" cy="68" rx="6" ry="3" fill="#fff" opacity="0.5" filter="url(#bl)"/><ellipse cx="740" cy="78" rx="16" ry="4" fill="#fff" opacity="0.7" filter="url(#bl)"/><ellipse cx="760" cy="70" rx="10" ry="4" fill="#fff" opacity="0.6" filter="url(#bl)"/><ellipse cx="776" cy="62" rx="7" ry="5" fill="#fff" opacity="0.8" filter="url(#bl)"/><ellipse cx="782" cy="74" rx="6" ry="5" fill="#fff" opacity="0.85" filter="url(#bl)"/><ellipse cx="750" cy="58" rx="8" ry="2.5" fill="#fff" opacity="0.5" filter="url(#bl)"/><ellipse cx="600" cy="57" rx="4" ry="2" fill="#fff" opacity="0.8" filter="url(#bl)"/><ellipse cx="704" cy="58" rx="5" ry="2" fill="#fff" opacity="0.6" filter="url(#bl)"/><rect x="560" y="84.3" width="230" height="8.2" fill="#9fb0a8"/><rect x="560" y="84.3" width="230" height="1.2" fill="#c8d4dc"/><rect x="580" y="84" width="11" height="8.5" fill="#c9b8a0"/><rect x="591" y="80.1" width="9" height="12.3" fill="#4a4a82"/><rect x="600" y="80.1" width="11.3" height="12.3" fill="#c8c0d8"/><rect x="591" y="80.1" width="20.3" height="2.2" fill="#9080a0"/><rect x="612" y="86" width="8" height="6.5" fill="#e6e6ea"/><rect x="622" y="87" width="10" height="5.5" fill="#8aa880"/><rect x="632" y="86.5" width="9" height="6" fill="#e0e4ea"/><rect x="641.2" y="66.4" width="7.8" height="26" fill="#6a78c0"/><rect x="649" y="63" width="9" height="29.4" fill="#b0c0e8"/><rect x="658.2" y="80.7" width="13.5" height="11.7" fill="#405890"/><rect x="658.2" y="80.7" width="13.5" height="2.8" fill="#d0c090"/><rect x="669.3" y="62.8" width="5.7" height="29.6" fill="#2a4e9c"/><rect x="675" y="62.8" width="5.7" height="29.6" fill="#4070c0"/><rect x="681" y="86" width="7" height="6.5" fill="#c8d0dc"/><rect x="688" y="85" width="6" height="7.5" fill="#a87060"/><rect x="694" y="86" width="4" height="6.5" fill="#e8e8ee"/><rect x="698" y="65" width="8.9" height="11" fill="#a09ca8"/><rect x="696.6" y="76" width="12.4" height="16.4" fill="#6a84bc"/><rect x="709" y="84" width="6" height="8.5" fill="#e8eaf2"/><rect x="715" y="86.5" width="10" height="6" fill="#c8a890"/><rect x="725" y="86" width="25" height="6.5" fill="#a8b8a8"/><rect x="752" y="86.2" width="11.6" height="6.2" fill="#c8d6ec"/><rect x="764.3" y="82.8" width="23.5" height="9.6" fill="#5a4c46"/><rect x="764.3" y="82.8" width="23.5" height="2.8" fill="#a88c78"/><path d="M669.3,62.8 L674.8,56.8 L680.7,62.8Z" fill="#203f88"/><path d="M641.2,66.4 L649,63 L658,63 L649,66.4Z" fill="#8090c8"/></g><path d="M578,54 L588.5,54 L576.5,73 L566.4,73Z" fill="#72bde0"/><path d="M586.2,58.7 L595.5,58.7 L579.8,86 L592.7,86 L589.5,92.4 L565,92.4Z" fill="#3f90c2"/></svg><div class="a" style="left:711px;top:55.2px;width:61.5px;height:16.7px;border:1.6px solid #505050;border-radius:9px;background:#fff"></div><svg class="a" style="left:755.5px;top:57.5px;width:12px;height:11px" viewBox="0 0 12 11"><path d="M0.8,1.6 Q5.5,-0.2 10.2,1.6 L6.6,5.6 L6.4,9.6 L4.6,8.6 L4.4,5.6Z" fill="#3b7cc6"/><ellipse cx="5.5" cy="1.7" rx="4.2" ry="0.9" fill="#b8dcf6"/><path d="M7,6.3 L9.6,9.2 M9.6,6.3 L7,9.2" stroke="#d8482e" stroke-width="1.2"/></svg><svg class="a" style="left:0;top:0;width:200px;height:100px" viewBox="0 0 200 100"><g stroke="#f39a3a" stroke-width="0.6" opacity="1"><line x1="130.49" y1="68.69" x2="134.47" y2="68.35"/><line x1="130.35" y1="67.98" x2="134.17" y2="66.81"/><line x1="130.06" y1="67.30" x2="133.56" y2="65.36"/><line x1="129.64" y1="66.70" x2="132.66" y2="64.08"/><line x1="129.11" y1="66.20" x2="131.51" y2="63.01"/><line x1="128.48" y1="65.83" x2="130.17" y2="62.20"/><line x1="127.79" y1="65.59" x2="128.69" y2="61.69"/><line x1="127.06" y1="65.50" x2="127.13" y2="61.50"/><line x1="126.33" y1="65.56" x2="125.57" y2="61.64"/><line x1="125.63" y1="65.78" x2="124.07" y2="62.10"/><line x1="124.99" y1="66.13" x2="122.70" y2="62.86"/><line x1="124.44" y1="66.61" x2="121.51" y2="63.89"/><line x1="124.00" y1="67.20" x2="120.57" y2="65.14"/><line x1="123.69" y1="67.86" x2="119.91" y2="66.56"/><line x1="123.53" y1="68.57" x2="119.56" y2="68.09"/></g><circle cx="127" cy="69.5" r="3.6" fill="#f49a3e"/><path d="M111.5,72.8 L112,69 L113.8,68.5 L114.3,66.5 L116,66.5 L116.3,64.5 L117.5,64.5 L118,66.8 L119.5,66.8 L120,63 L121.6,63 L122,67.5 L123.5,67.5 L124,70 L126.5,70 L127.5,68.5 L129.5,68.5 L130.5,70.5 L134,70.3 L137,70.8 L140,70.5 L143,72.8Z" fill="#3d74cc"/><path d="M119.5,66.8 L120,63 L121.6,63 L122,67.5Z" fill="#5aa0e8"/><path d="M131,71 L134,71 L134,72 L131,72Z" fill="#e86060"/><path d="M105,75.8 Q128,69 151.5,75.8 Q128,72.3 105,75.8Z" fill="#3a62be"/></svg><svg class="a" style="left:0;top:0" width="878" height="500" viewBox="0 0 878 500" font-family="Liberation Sans, sans-serif"><text x="176.00" y="104.00" font-size="6.9" fill="#252423" textLength="36.70" lengthAdjust="spacingAndGlyphs" stroke="#252423" stroke-width="0.3">Service Type</text><text x="177.00" y="120.30" font-size="7.4" fill="#555" textLength="8.40" lengthAdjust="spacingAndGlyphs" >All</text><text x="396.50" y="104.00" font-size="6.9" fill="#252423" textLength="44.10" lengthAdjust="spacingAndGlyphs" stroke="#252423" stroke-width="0.3">Council District</text><text x="397.50" y="120.30" font-size="7.4" fill="#555" textLength="8.40" lengthAdjust="spacingAndGlyphs" >All</text><text x="476.40" y="104.00" font-size="6.9" fill="#252423" textLength="24.60" lengthAdjust="spacingAndGlyphs" stroke="#252423" stroke-width="0.3">Zip Code</text><text x="477.50" y="120.30" font-size="7.4" fill="#555" textLength="8.40" lengthAdjust="spacingAndGlyphs" >All</text><text x="572.50" y="104.00" font-size="6.9" fill="#252423" textLength="18.10" lengthAdjust="spacingAndGlyphs" stroke="#252423" stroke-width="0.3">Status</text><text x="574.00" y="120.30" font-size="7.4" fill="#555" textLength="8.40" lengthAdjust="spacingAndGlyphs" >All</text><text x="675.00" y="103.20" font-size="6.9" fill="#252423" textLength="56.60" lengthAdjust="spacingAndGlyphs" stroke="#252423" stroke-width="0.3">On Time - Past Due</text><text x="676.70" y="120.30" font-size="7.4" fill="#555" textLength="8.40" lengthAdjust="spacingAndGlyphs" >All</text><text x="104.00" y="128.30" font-size="6.6" fill="#3f83b8" textLength="47.60" lengthAdjust="spacingAndGlyphs" >Service Request</text><text x="112.20" y="143.20" font-size="8.6" fill="#252423" textLength="31.80" lengthAdjust="spacingAndGlyphs" stroke="#252423" stroke-width="0.05">505,164</text><text x="121.80" y="156.40" font-size="6.4" fill="#707070" textLength="13.20" lengthAdjust="spacingAndGlyphs" >Total</text><text x="99.00" y="184.50" font-size="7.2" fill="#252423" textLength="32.50" lengthAdjust="spacingAndGlyphs" stroke="#252423" stroke-width="0.25">Date Filter</text><text x="119.00" y="195.90" font-size="6.2" fill="#252423" textLength="12.50" lengthAdjust="spacingAndGlyphs" >2020</text><text x="119.00" y="207.90" font-size="6.2" fill="#252423" textLength="12.50" lengthAdjust="spacingAndGlyphs" >2021</text><text x="119.00" y="219.90" font-size="6.2" fill="#252423" textLength="12.50" lengthAdjust="spacingAndGlyphs" >2022</text><text x="119.00" y="231.90" font-size="6.2" fill="#252423" textLength="12.50" lengthAdjust="spacingAndGlyphs" >2023</text><text x="119.00" y="243.90" font-size="6.2" fill="#252423" textLength="12.50" lengthAdjust="spacingAndGlyphs" >2024</text><text x="119.00" y="255.90" font-size="6.2" fill="#252423" textLength="12.50" lengthAdjust="spacingAndGlyphs" >2025</text><text x="130.00" y="267.90" font-size="6.2" fill="#252423" textLength="19.80" lengthAdjust="spacingAndGlyphs" >January</text><text x="130.00" y="279.90" font-size="6.2" fill="#252423" textLength="22.70" lengthAdjust="spacingAndGlyphs" >February</text><text x="130.00" y="291.90" font-size="6.2" fill="#252423" textLength="16.60" lengthAdjust="spacingAndGlyphs" >March</text><text x="130.00" y="303.90" font-size="6.2" fill="#252423" textLength="11.20" lengthAdjust="spacingAndGlyphs" >April</text><text x="130.00" y="315.90" font-size="6.2" fill="#252423" textLength="10.60" lengthAdjust="spacingAndGlyphs" >May</text><text x="130.00" y="327.90" font-size="6.2" fill="#252423" textLength="11.80" lengthAdjust="spacingAndGlyphs" >June</text><text x="130.00" y="339.90" font-size="6.2" fill="#252423" textLength="10.20" lengthAdjust="spacingAndGlyphs" >July</text><text x="130.00" y="351.90" font-size="6.2" fill="#252423" textLength="18.60" lengthAdjust="spacingAndGlyphs" >August</text><text x="130.00" y="363.90" font-size="6.2" fill="#252423" textLength="28.20" lengthAdjust="spacingAndGlyphs" >September</text><text x="130.00" y="375.90" font-size="6.2" fill="#252423" textLength="21.40" lengthAdjust="spacingAndGlyphs" >October</text><text x="130.00" y="387.90" font-size="6.2" fill="#252423" textLength="25.60" lengthAdjust="spacingAndGlyphs" >November</text><text x="130.00" y="399.90" font-size="6.2" fill="#252423" textLength="26.60" lengthAdjust="spacingAndGlyphs" >December</text><text x="328.35" y="144.40" font-size="7" fill="#111" font-weight="bold" textLength="99.30" lengthAdjust="spacingAndGlyphs" >Total Service Request by Zip Code</text><text x="176.10" y="154.20" font-size="6.2" fill="#252423" font-weight="bold" textLength="21.70" lengthAdjust="spacingAndGlyphs" >Services</text><text x="182.70" y="164.70" font-size="6.4" fill="#605e5c" textLength="17.48" lengthAdjust="spacingAndGlyphs" >Animal</text><text x="182.70" y="177.00" font-size="6.4" fill="#605e5c" textLength="75.35" lengthAdjust="spacingAndGlyphs" >Buildings &amp; City Development</text><text x="182.70" y="189.30" font-size="6.4" fill="#605e5c" textLength="52.44" lengthAdjust="spacingAndGlyphs" >Community Services</text><text x="182.70" y="201.60" font-size="6.4" fill="#605e5c" textLength="43.76" lengthAdjust="spacingAndGlyphs" >Consumer Affairs</text><text x="182.70" y="213.90" font-size="6.4" fill="#605e5c" textLength="60.18" lengthAdjust="spacingAndGlyphs" >Electric, Water &amp; Sewer</text><text x="182.70" y="226.20" font-size="6.4" fill="#605e5c" textLength="55.95" lengthAdjust="spacingAndGlyphs" >Environmental Quality</text><text x="182.70" y="238.50" font-size="6.4" fill="#605e5c" textLength="36.24" lengthAdjust="spacingAndGlyphs" >Fire &amp; Rescue</text><text x="182.70" y="250.80" font-size="6.4" fill="#605e5c" textLength="20.99" lengthAdjust="spacingAndGlyphs" >Housing</text><text x="182.70" y="263.10" font-size="6.4" fill="#605e5c" textLength="21.93" lengthAdjust="spacingAndGlyphs" >Libraries</text><text x="182.70" y="275.40" font-size="6.4" fill="#605e5c" textLength="26.07" lengthAdjust="spacingAndGlyphs" >Mosquitos</text><text x="182.70" y="287.70" font-size="6.4" fill="#605e5c" textLength="59.14" lengthAdjust="spacingAndGlyphs" >Mowing &amp; Landscaping</text><text x="182.70" y="300.00" font-size="6.4" fill="#605e5c" textLength="18.11" lengthAdjust="spacingAndGlyphs" >My Jax</text><text x="182.70" y="312.30" font-size="6.4" fill="#605e5c" textLength="37.83" lengthAdjust="spacingAndGlyphs" >Other Services</text><text x="182.70" y="324.60" font-size="6.4" fill="#605e5c" textLength="19.39" lengthAdjust="spacingAndGlyphs" >Parking</text><text x="182.70" y="336.90" font-size="6.4" fill="#605e5c" textLength="49.27" lengthAdjust="spacingAndGlyphs" >Parks &amp; Recreation</text><text x="182.70" y="349.20" font-size="6.4" fill="#605e5c" textLength="21.62" lengthAdjust="spacingAndGlyphs" >Property</text><text x="182.70" y="361.50" font-size="6.4" fill="#605e5c" textLength="40.38" lengthAdjust="spacingAndGlyphs" >Public Buildings</text><text x="182.70" y="373.80" font-size="6.4" fill="#605e5c" textLength="91.88" lengthAdjust="spacingAndGlyphs" >Signs, Signals &amp; Roadway Markings</text><text x="182.70" y="386.10" font-size="6.4" fill="#605e5c" textLength="77.25" lengthAdjust="spacingAndGlyphs" >Streets, Sidewalks &amp; Drainage</text><text x="635.75" y="144.60" font-size="7" fill="#111" font-weight="bold" textLength="99.50" lengthAdjust="spacingAndGlyphs" >Total Service Request by Zip Code</text><text x="622.90" y="156.60" font-size="7.2" fill="#fff" textLength="26.20" lengthAdjust="spacingAndGlyphs" stroke="#fff" stroke-width="0.2">Zip Code</text><text x="698.90" y="156.40" font-size="7.2" fill="#fff" textLength="17.40" lengthAdjust="spacingAndGlyphs" stroke="#fff" stroke-width="0.2">Totals</text><text x="751.00" y="156.40" font-size="7.2" fill="#fff" textLength="5.40" lengthAdjust="spacingAndGlyphs" stroke="#fff" stroke-width="0.2">%</text><text x="595.00" y="172.10" font-size="6.4" fill="#333" textLength="15.43" lengthAdjust="spacingAndGlyphs" >32209</text><text x="699.48" y="172.10" font-size="6.4" fill="#333" textLength="16.82" lengthAdjust="spacingAndGlyphs" >39,972</text><text x="746.49" y="172.10" font-size="6.4" fill="#333" textLength="15.31" lengthAdjust="spacingAndGlyphs" >7.91%</text><text x="595.00" y="184.20" font-size="6.4" fill="#333" textLength="15.43" lengthAdjust="spacingAndGlyphs" >32218</text><text x="699.48" y="184.20" font-size="6.4" fill="#333" textLength="16.82" lengthAdjust="spacingAndGlyphs" >38,651</text><text x="746.49" y="184.20" font-size="6.4" fill="#333" textLength="15.31" lengthAdjust="spacingAndGlyphs" >7.65%</text><text x="595.00" y="196.30" font-size="6.4" fill="#333" textLength="15.43" lengthAdjust="spacingAndGlyphs" >32208</text><text x="699.48" y="196.30" font-size="6.4" fill="#333" textLength="16.82" lengthAdjust="spacingAndGlyphs" >31,652</text><text x="746.49" y="196.30" font-size="6.4" fill="#333" textLength="15.31" lengthAdjust="spacingAndGlyphs" >6.27%</text><text x="595.00" y="208.40" font-size="6.4" fill="#333" textLength="15.43" lengthAdjust="spacingAndGlyphs" >32210</text><text x="699.48" y="208.40" font-size="6.4" fill="#333" textLength="16.82" lengthAdjust="spacingAndGlyphs" >29,400</text><text x="746.49" y="208.40" font-size="6.4" fill="#333" textLength="15.31" lengthAdjust="spacingAndGlyphs" >5.82%</text><text x="595.00" y="220.50" font-size="6.4" fill="#333" textLength="15.43" lengthAdjust="spacingAndGlyphs" >32202</text><text x="699.48" y="220.50" font-size="6.4" fill="#333" textLength="16.82" lengthAdjust="spacingAndGlyphs" >29,349</text><text x="746.49" y="220.50" font-size="6.4" fill="#333" textLength="15.31" lengthAdjust="spacingAndGlyphs" >5.81%</text><text x="595.00" y="232.60" font-size="6.4" fill="#333" textLength="15.43" lengthAdjust="spacingAndGlyphs" >32225</text><text x="699.48" y="232.60" font-size="6.4" fill="#333" textLength="16.82" lengthAdjust="spacingAndGlyphs" >23,695</text><text x="746.49" y="232.60" font-size="6.4" fill="#333" textLength="15.31" lengthAdjust="spacingAndGlyphs" >4.69%</text><text x="595.00" y="244.70" font-size="6.4" fill="#333" textLength="15.43" lengthAdjust="spacingAndGlyphs" >32206</text><text x="699.48" y="244.70" font-size="6.4" fill="#333" textLength="16.82" lengthAdjust="spacingAndGlyphs" >23,457</text><text x="746.49" y="244.70" font-size="6.4" fill="#333" textLength="15.31" lengthAdjust="spacingAndGlyphs" >4.64%</text><text x="594.80" y="263.60" font-size="6.4" fill="#111" font-weight="bold" textLength="13.60" lengthAdjust="spacingAndGlyphs" >Total</text><text x="711.20" y="263.60" font-size="6.4" fill="#111" font-weight="bold" textLength="22.20" lengthAdjust="spacingAndGlyphs" >505,164</text><text x="746.20" y="263.60" font-size="6.4" fill="#111" font-weight="bold" textLength="23.40" lengthAdjust="spacingAndGlyphs" >100.00%</text><text x="641.50" y="287.20" font-size="7" fill="#111" font-weight="bold" textLength="87.60" lengthAdjust="spacingAndGlyphs" >Total Service Request by Type</text><text x="643.00" y="299.30" font-size="7.2" fill="#fff" textLength="20.40" lengthAdjust="spacingAndGlyphs" stroke="#fff" stroke-width="0.2">Service</text><text x="720.95" y="299.30" font-size="7.2" fill="#fff" textLength="17.10" lengthAdjust="spacingAndGlyphs" stroke="#fff" stroke-width="0.2">Totals</text><text x="755.80" y="299.30" font-size="7.2" fill="#fff" textLength="5.40" lengthAdjust="spacingAndGlyphs" stroke="#fff" stroke-width="0.2">%</text><text x="594.00" y="314.70" font-size="6.4" fill="#333" textLength="16.96" lengthAdjust="spacingAndGlyphs" >Animal</text><text x="721.28" y="314.70" font-size="6.4" fill="#333" textLength="16.82" lengthAdjust="spacingAndGlyphs" >40,691</text><text x="751.19" y="314.70" font-size="6.4" fill="#333" textLength="15.31" lengthAdjust="spacingAndGlyphs" >8.06%</text><text x="594.00" y="326.75" font-size="6.4" fill="#333" textLength="73.11" lengthAdjust="spacingAndGlyphs" >Buildings &amp; City Development</text><text x="724.34" y="326.75" font-size="6.4" fill="#333" textLength="13.76" lengthAdjust="spacingAndGlyphs" >1,559</text><text x="751.19" y="326.75" font-size="6.4" fill="#333" textLength="15.31" lengthAdjust="spacingAndGlyphs" >0.31%</text><text x="594.00" y="338.80" font-size="6.4" fill="#333" textLength="50.89" lengthAdjust="spacingAndGlyphs" >Community Services</text><text x="724.34" y="338.80" font-size="6.4" fill="#333" textLength="13.76" lengthAdjust="spacingAndGlyphs" >8,344</text><text x="751.19" y="338.80" font-size="6.4" fill="#333" textLength="15.31" lengthAdjust="spacingAndGlyphs" >1.65%</text><text x="594.00" y="350.85" font-size="6.4" fill="#333" textLength="42.46" lengthAdjust="spacingAndGlyphs" >Consumer Affairs</text><text x="724.34" y="350.85" font-size="6.4" fill="#333" textLength="13.76" lengthAdjust="spacingAndGlyphs" >3,355</text><text x="751.19" y="350.85" font-size="6.4" fill="#333" textLength="15.31" lengthAdjust="spacingAndGlyphs" >0.66%</text><text x="594.00" y="362.90" font-size="6.4" fill="#333" textLength="58.39" lengthAdjust="spacingAndGlyphs" >Electric, Water &amp; Sewer</text><text x="729.33" y="362.90" font-size="6.4" fill="#333" textLength="8.77" lengthAdjust="spacingAndGlyphs" >114</text><text x="751.19" y="362.90" font-size="6.4" fill="#333" textLength="15.31" lengthAdjust="spacingAndGlyphs" >0.02%</text><text x="594.00" y="374.95" font-size="6.4" fill="#333" textLength="54.29" lengthAdjust="spacingAndGlyphs" >Environmental Quality</text><text x="724.34" y="374.95" font-size="6.4" fill="#333" textLength="13.76" lengthAdjust="spacingAndGlyphs" >3,637</text><text x="751.19" y="374.95" font-size="6.4" fill="#333" textLength="15.31" lengthAdjust="spacingAndGlyphs" >0.72%</text><text x="594.00" y="387.00" font-size="6.4" fill="#333" textLength="35.16" lengthAdjust="spacingAndGlyphs" >Fire &amp; Rescue</text><text x="724.34" y="387.00" font-size="6.4" fill="#333" textLength="13.76" lengthAdjust="spacingAndGlyphs" >1,670</text><text x="751.19" y="387.00" font-size="6.4" fill="#333" textLength="15.31" lengthAdjust="spacingAndGlyphs" >0.33%</text><text x="594.00" y="407.60" font-size="6.4" fill="#111" font-weight="bold" textLength="13.60" lengthAdjust="spacingAndGlyphs" >Total</text><text x="718.30" y="407.60" font-size="6.4" fill="#111" font-weight="bold" textLength="22.20" lengthAdjust="spacingAndGlyphs" >505,164</text><text x="747.60" y="407.60" font-size="6.4" fill="#111" font-weight="bold" textLength="23.40" lengthAdjust="spacingAndGlyphs" >100.00%</text><text x="719.90" y="66.30" font-size="6.6" fill="#2a6496" font-weight="bold" textLength="35.50" lengthAdjust="spacingAndGlyphs" stroke="#2a6496" stroke-width="0.2">Clear Filters</text><text x="107.8" y="86.6" font-size="12.8" font-weight="bold" fill="#2f5fb8" textLength="9.6" lengthAdjust="spacingAndGlyphs" stroke="#2f5fb8" stroke-width="0.25">M</text><text x="117.3" y="86.6" font-size="9.9" font-weight="bold" fill="#2f5fb8" textLength="8" lengthAdjust="spacingAndGlyphs" stroke="#2f5fb8" stroke-width="0.2">Y</text><text x="125.8" y="86.6" font-size="13" font-weight="bold" fill="#9b3ba6" textLength="4.6" lengthAdjust="spacingAndGlyphs" stroke="#9b3ba6" stroke-width="0.2">J</text><text x="130.4" y="86.6" font-size="9.9" font-weight="bold" fill="#9b3ba6" textLength="17.8" lengthAdjust="spacingAndGlyphs" stroke="#9b3ba6" stroke-width="0.2">AX</text></svg></body></html>
